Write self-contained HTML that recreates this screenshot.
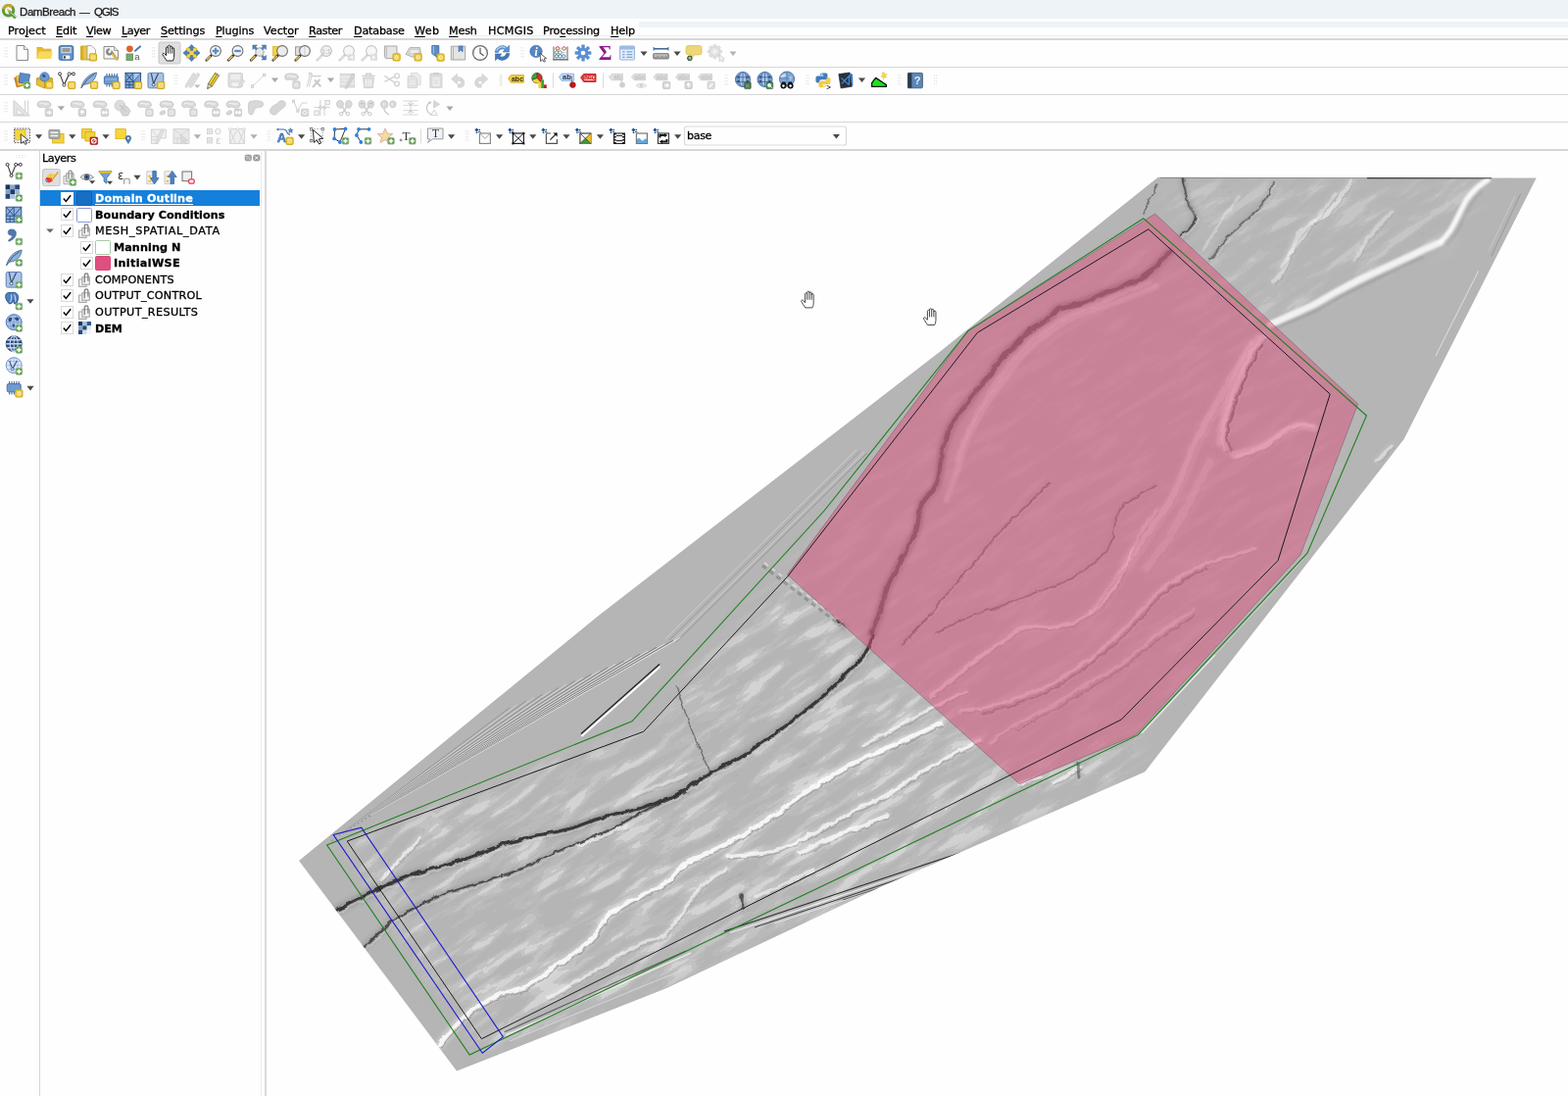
<!DOCTYPE html>
<html lang="en"><head><meta charset="utf-8"><title>DamBreach — QGIS</title>
<style>
html,body{margin:0;padding:0;}
body{width:1600px;height:1118px;overflow:hidden;background:#fefefe;position:relative;font-family:"DejaVu Sans","Liberation Sans",sans-serif;}
.t{position:absolute;white-space:pre;line-height:16px;height:16px;will-change:transform;-webkit-font-smoothing:antialiased;-webkit-text-stroke:0.3px currentColor;}
.l{font-family:"Liberation Sans",sans-serif;}
.a{position:absolute;}
.hl{position:absolute;left:0;width:1600px;height:1.6px;background:#d6d6d6;}
u{text-decoration-thickness:1px;text-underline-offset:1.5px;}
</style></head>
<body>
<svg class="a" style="left:0;top:0" width="1600" height="1118" viewBox="0 0 1600 1118">
<polygon points="1181.7,180.7 1567.7,181.6 1432.6,448.0 1168.3,787.2 900.0,904.0 680.0,1008.0 466.0,1092.5 305.0,878.0 610.7,628.0 960.0,358.0" fill="#b5b5b5"/>
<defs><clipPath id="dem"><polygon points="1181.7,180.7 1567.7,181.6 1432.6,448.0 1168.3,787.2 900.0,904.0 680.0,1008.0 466.0,1092.5 305.0,878.0 610.7,628.0 960.0,358.0"/></clipPath><filter id="b0" x="-5%" y="-5%" width="110%" height="110%"><feGaussianBlur stdDeviation="0.9"/></filter><filter id="b2" x="-5%" y="-5%" width="110%" height="110%"><feGaussianBlur stdDeviation="2.2"/></filter><filter id="rg" x="-2%" y="-2%" width="104%" height="104%"><feTurbulence type="fractalNoise" baseFrequency="0.11" numOctaves="2" seed="3" result="t"/><feDisplacementMap in="SourceGraphic" in2="t" scale="5" xChannelSelector="R" yChannelSelector="G"/><feGaussianBlur stdDeviation="0.55"/></filter><filter id="nz" x="0" y="0" width="100%" height="100%" color-interpolation-filters="sRGB"><feTurbulence type="fractalNoise" baseFrequency="0.018 0.085" numOctaves="4" seed="11"/><feColorMatrix type="matrix" values="1.1 0 0 0 0.16  1.1 0 0 0 0.16  1.1 0 0 0 0.16  0 0 0 0 1"/><feComponentTransfer><feFuncR type="discrete" tableValues="0.59 0.65 0.69 0.71 0.71 0.71 0.73 0.765 0.83"/><feFuncG type="discrete" tableValues="0.59 0.65 0.69 0.71 0.71 0.71 0.73 0.765 0.83"/><feFuncB type="discrete" tableValues="0.59 0.65 0.69 0.71 0.71 0.71 0.73 0.765 0.83"/></feComponentTransfer></filter></defs>
<defs><mask id="mk1" maskUnits="userSpaceOnUse" x="280" y="160" width="1320" height="958"><g filter="url(#b3)"><polygon points="354.0,858.0 656.0,746.0 803.0,588.0 1040.0,800.0 1160.0,750.0 1168.0,787.0 900.0,904.0 680.0,1008.0 492.0,1074.0" fill="#fff"/><polygon points="1185.0,183.0 1525.0,183.0 1480.0,250.0 1300.0,335.0 1180.0,222.0" fill="#8f8f8f"/><polygon points="1000.0,345.0 1175.0,235.0 1385.0,412.0 1327.0,566.0 1158.0,750.0 1040.0,800.0 803.0,586.0" fill="#5a5a5a"/></g></mask><filter id="b3" x="-5%" y="-5%" width="110%" height="110%"><feGaussianBlur stdDeviation="9"/></filter></defs>
<g clip-path="url(#dem)">
<g mask="url(#mk1)"><g transform="rotate(-33 900 640)"><rect x="100" y="250" width="1600" height="800" filter="url(#nz)"/></g></g>
<g fill="none" stroke-linejoin="round" stroke-linecap="round" filter="url(#b2)">
<path d="M1379.0 184.4C1375.2 189.7 1364.5 207.6 1356.0 216.0C1347.5 224.4 1335.5 225.6 1328.0 235.0C1320.5 244.4 1315.7 263.9 1311.0 272.7C1306.3 281.5 1301.8 285.2 1300.0 287.7" stroke="#fff" stroke-width="8.8" opacity="0.14"/>
<path d="M1420.0 216.0C1416.3 220.1 1403.9 232.6 1397.7 240.8C1391.5 249.0 1385.2 261.0 1382.7 265.0" stroke="#fff" stroke-width="6.6" opacity="0.12"/>
<path d="M1363.0 197.6C1357.5 204.7 1339.4 227.5 1330.0 240.0C1320.6 252.5 1310.6 267.2 1306.7 272.7" stroke="#fff" stroke-width="6.6" opacity="0.12"/>
<path d="M1172.0 288.0C1165.0 290.8 1143.7 299.3 1130.0 305.0C1116.3 310.7 1102.0 315.8 1090.0 322.0C1078.0 328.2 1067.2 334.7 1058.0 342.0C1048.8 349.3 1042.2 357.7 1035.0 366.0C1027.8 374.3 1021.2 383.0 1015.0 392.0C1008.8 401.0 1003.0 411.0 998.0 420.0C993.0 429.0 988.7 437.7 985.0 446.0C981.3 454.3 977.5 466.0 976.0 470.0" stroke="#fff" stroke-width="11.0" opacity="0.09"/>
<path d="M1290.0 342.6C1287.5 345.9 1279.2 355.1 1275.0 362.6C1270.8 370.1 1268.3 379.4 1265.0 387.7C1261.7 396.0 1257.9 404.0 1255.0 412.7C1252.1 421.4 1248.5 432.4 1247.8 440.0C1247.1 447.6 1250.5 455.0 1251.0 458.0" stroke="#fff" stroke-width="9.9" opacity="0.18"/>
<path d="M1262.0 466.0C1266.7 464.2 1282.0 459.3 1290.0 455.0C1298.0 450.7 1304.2 443.7 1310.0 440.0C1315.8 436.3 1320.0 433.5 1325.0 432.7C1330.0 431.9 1337.5 434.6 1340.0 435.0" stroke="#fff" stroke-width="8.8" opacity="0.20"/>
<path d="M1275.0 350.0C1270.5 358.3 1257.2 383.3 1248.0 400.0C1238.8 416.7 1228.0 433.3 1220.0 450.0C1212.0 466.7 1207.5 485.3 1200.0 500.0C1192.5 514.7 1183.3 525.4 1175.0 538.0C1166.7 550.6 1154.2 569.2 1150.0 575.5" stroke="#fff" stroke-width="13.2" opacity="0.10"/>
<path d="M1235.0 470.0C1231.7 476.7 1221.7 497.5 1215.0 510.0C1208.3 522.5 1202.5 533.3 1195.0 545.0C1187.5 556.7 1174.2 574.2 1170.0 580.0" stroke="#fff" stroke-width="17.6" opacity="0.08"/>
<path d="M1155.5 560.0C1153.0 565.4 1145.5 583.4 1140.5 592.6C1135.5 601.8 1132.2 608.3 1125.5 615.0C1118.8 621.7 1108.8 628.4 1100.4 632.6C1092.1 636.8 1084.6 638.8 1075.4 640.0C1066.2 641.2 1053.7 637.9 1045.3 640.0C1036.9 642.1 1032.8 647.7 1025.3 652.7C1017.8 657.7 1008.4 663.8 1000.0 670.0C991.6 676.2 983.3 683.3 975.0 690.0C966.7 696.7 954.2 706.7 950.0 710.0" stroke="#fff" stroke-width="7.7" opacity="0.20"/>
<path d="M1280.0 560.0C1271.8 562.5 1243.1 570.4 1230.7 575.0C1218.3 579.6 1213.9 582.6 1205.6 587.6C1197.2 592.6 1187.7 598.8 1180.6 605.0C1173.5 611.2 1169.3 618.3 1163.0 625.0C1156.7 631.7 1150.5 637.9 1143.0 645.0C1135.5 652.1 1126.3 661.0 1118.0 667.7C1109.7 674.4 1101.3 679.6 1093.0 685.0C1084.7 690.4 1078.4 695.0 1067.9 700.0C1057.4 705.0 1041.3 711.2 1030.0 715.0C1018.7 718.8 1008.3 721.3 1000.0 723.0C991.7 724.7 983.3 724.7 980.0 725.0" stroke="#fff" stroke-width="7.0" opacity="0.18"/>
<path d="M1218.0 622.6C1211.8 626.8 1193.1 638.5 1180.6 647.7C1168.1 656.9 1155.5 669.0 1143.0 677.7C1130.5 686.4 1117.9 692.5 1105.4 700.0C1092.9 707.5 1079.7 716.1 1068.0 722.8C1056.3 729.5 1044.7 734.1 1035.0 740.0C1025.3 745.9 1014.2 755.0 1010.0 758.0" stroke="#fff" stroke-width="6.6" opacity="0.14"/>
<path d="M1180.0 520.0C1177.6 523.3 1170.6 531.7 1165.7 540.0C1160.8 548.3 1156.5 560.0 1150.7 570.0C1144.9 580.0 1137.0 590.8 1130.7 600.0C1124.4 609.2 1116.0 620.8 1113.0 625.0" stroke="#fff" stroke-width="6.6" opacity="0.12"/>
<path d="M960.0 737.6C953.0 740.8 932.4 750.4 918.0 757.0C903.6 763.6 888.4 769.3 873.7 777.0C859.0 784.7 844.4 793.5 829.8 803.0C815.2 812.5 800.6 824.5 786.0 834.0C771.4 843.5 756.7 852.0 742.0 860.0C727.3 868.0 708.3 875.3 698.0 882.0C687.7 888.7 687.7 894.6 680.0 900.0C672.3 905.4 661.5 909.2 652.0 914.5C642.5 919.8 630.2 925.4 623.0 931.6C615.8 937.8 613.7 946.0 609.0 951.7C604.3 957.4 601.9 960.3 594.7 966.0C587.5 971.7 575.5 979.3 566.0 986.0C556.5 992.7 547.0 1001.2 537.5 1006.0C528.0 1010.8 518.6 1010.3 509.0 1014.6C499.4 1018.9 488.6 1025.1 480.0 1031.8C471.4 1038.5 462.6 1049.0 457.4 1054.7C452.2 1060.4 450.2 1064.1 448.8 1066.0" stroke="#fff" stroke-width="8.8" opacity="0.34"/>
<path d="M985.0 705.0C977.5 708.8 954.2 720.5 940.0 728.0C925.8 735.5 910.0 744.7 900.0 750.0C890.0 755.3 883.3 758.3 880.0 760.0" stroke="#fff" stroke-width="6.6" opacity="0.24"/>
<path d="M1000.0 755.0C993.3 758.5 971.7 769.5 960.0 776.0C948.3 782.5 939.2 788.2 930.0 794.0C920.8 799.8 915.0 804.8 905.0 810.5C895.0 816.2 882.5 821.4 870.0 828.0C857.5 834.6 843.3 843.3 830.0 850.0C816.7 856.7 804.7 864.1 790.0 868.0C775.3 871.9 750.0 872.6 742.0 873.5" stroke="#fff" stroke-width="7.0" opacity="0.28"/>
<path d="M742.0 886.0C737.5 889.2 725.3 894.0 715.0 905.0C704.7 916.0 690.5 942.0 680.0 951.7C669.5 961.4 661.5 958.3 652.0 963.0C642.5 967.7 632.5 974.2 623.0 980.0C613.5 985.8 605.2 991.2 594.7 997.5C584.2 1003.8 565.8 1014.6 560.0 1018.0" stroke="#fff" stroke-width="6.6" opacity="0.20"/>
<path d="M905.0 832.0C899.2 834.3 880.8 841.7 870.0 846.0C859.2 850.3 849.2 854.0 840.0 858.0C830.8 862.0 819.2 868.0 815.0 870.0" stroke="#fff" stroke-width="8.8" opacity="0.28"/>
<path d="M830.0 888.0C825.0 890.3 810.0 897.5 800.0 902.0C790.0 906.5 775.0 912.8 770.0 915.0" stroke="#fff" stroke-width="7.7" opacity="0.20"/>
<path d="M640.0 842.0C635.8 843.7 623.3 848.7 615.0 852.0C606.7 855.3 594.2 860.3 590.0 862.0" stroke="#fff" stroke-width="7.7" opacity="0.16"/>
<path d="M428.8 854.4C425.7 857.8 416.7 867.9 410.0 875.0C403.3 882.1 392.2 893.6 388.7 897.3" stroke="#fff" stroke-width="6.6" opacity="0.24"/>
<path d="M700.0 790.0C695.0 792.0 679.2 798.3 670.0 802.0C660.8 805.7 649.2 810.3 645.0 812.0" stroke="#fff" stroke-width="6.6" opacity="0.14"/>
<path d="M1075.0 798.0C1077.5 796.7 1085.5 792.7 1090.0 790.0C1094.5 787.3 1100.0 783.3 1102.0 782.0" stroke="#fff" stroke-width="7.7" opacity="0.24"/>
<path d="M1040.0 800.0L1062.0 793.0" stroke="#fff" stroke-width="6.6" opacity="0.20"/>
<path d="M1392.0 505.0C1390.0 510.8 1384.3 529.2 1380.0 540.0C1375.7 550.8 1368.3 565.0 1366.0 570.0" stroke="#fff" stroke-width="6.6" opacity="0.14"/>
<path d="M1405.0 470.0L1420.0 455.0" stroke="#fff" stroke-width="6.6" opacity="0.16"/>
<path d="M1193.0 257.6C1189.2 261.3 1177.6 274.6 1170.5 280.0C1163.4 285.4 1158.0 286.7 1150.5 290.0C1143.0 293.3 1133.8 296.7 1125.4 300.0C1117.1 303.3 1108.0 307.5 1100.4 310.0C1092.8 312.5 1085.1 312.5 1080.0 315.0C1074.9 317.5 1075.0 321.2 1070.0 325.0C1065.0 328.8 1055.8 333.2 1050.0 337.8C1044.2 342.4 1040.0 347.8 1035.0 352.8C1030.0 357.8 1024.2 362.9 1020.0 367.9C1015.8 372.9 1014.2 377.5 1010.0 382.9C1005.8 388.3 1000.0 394.1 995.0 400.4C990.0 406.6 984.2 414.5 980.0 420.4C975.8 426.2 972.9 429.6 970.0 435.5C967.1 441.4 964.2 449.8 962.6 455.5C961.0 461.2 961.5 463.4 960.3 470.0C959.1 476.6 958.6 487.5 955.3 495.0C952.0 502.5 943.6 507.5 940.3 515.0C937.0 522.5 938.6 530.8 935.3 540.0C932.0 549.2 925.3 560.0 920.3 570.0C915.3 580.0 909.0 590.8 905.2 600.0C901.4 609.2 900.2 617.5 897.7 625.0C895.2 632.5 891.3 641.7 890.0 645.0" stroke="#555" stroke-width="11.0" opacity="0.17"/>
<path d="M890.0 648.0C889.3 650.4 888.0 658.1 885.6 662.6C883.2 667.1 879.8 670.4 875.6 675.0C871.4 679.6 865.6 685.0 860.6 690.0C855.6 695.0 851.0 700.0 845.6 705.0C840.2 710.0 834.7 714.5 828.0 720.0C821.3 725.5 813.4 731.9 805.5 737.8C797.6 743.7 788.8 749.5 780.4 755.3C772.0 761.1 763.7 767.8 755.4 772.8C747.1 777.8 737.9 781.1 730.4 785.3C722.9 789.5 717.0 793.7 710.3 797.9C703.6 802.1 697.8 806.6 690.3 810.4C682.8 814.1 673.6 817.5 665.2 820.4C656.9 823.3 649.4 825.5 640.2 828.0C631.0 830.5 619.2 832.7 610.0 835.4C600.8 838.1 592.3 842.0 585.0 844.2C577.7 846.4 573.9 847.0 566.0 848.7C558.1 850.4 547.0 852.0 537.5 854.4C528.0 856.8 518.6 859.7 509.0 863.0C499.4 866.3 489.6 871.1 480.0 874.4C470.4 877.7 461.2 880.1 451.7 883.0C442.2 885.9 432.6 888.3 423.0 891.6C413.4 894.9 403.9 898.8 394.4 903.0C384.9 907.2 374.4 912.7 365.8 917.0C357.2 921.3 346.8 926.8 343.0 928.8" stroke="#555" stroke-width="7.7" opacity="0.32"/>
<path d="M700.0 808.0C693.3 811.0 672.8 819.7 660.0 826.0C647.2 832.3 634.0 840.7 623.0 846.0C612.0 851.3 603.5 854.0 594.0 858.0C584.5 862.0 575.5 865.7 566.0 870.0C556.5 874.3 546.5 879.9 537.0 884.0C527.5 888.1 521.3 890.4 509.0 894.5C496.7 898.6 476.4 904.0 463.0 908.8C449.6 913.5 439.3 917.8 428.8 923.0C418.3 928.2 409.5 932.8 400.0 940.0C390.5 947.2 376.3 961.7 371.6 966.0" stroke="#555" stroke-width="5.3" opacity="0.26"/>
<path d="M1070.5 492.6C1065.9 497.2 1051.8 511.3 1043.0 520.0C1034.2 528.7 1025.5 536.7 1018.0 545.0C1010.5 553.3 1005.1 561.7 998.0 570.0C990.9 578.3 983.4 585.8 975.4 595.0C967.4 604.2 959.5 614.5 950.3 625.0C941.1 635.5 925.3 652.5 920.3 658.0" stroke="#555" stroke-width="3.8" opacity="0.16"/>
<path d="M1180.0 495.0C1173.8 499.2 1151.2 509.2 1143.0 520.0C1134.8 530.8 1139.0 548.3 1130.7 560.0C1122.4 571.7 1105.6 582.5 1093.0 590.0C1080.4 597.5 1065.4 600.8 1055.0 605.0C1044.6 609.2 1040.8 611.2 1030.5 615.0C1020.2 618.8 1005.6 622.9 993.0 628.0C980.4 633.1 961.3 642.5 955.0 645.4" stroke="#555" stroke-width="3.8" opacity="0.14"/>
<path d="M1288.0 352.0C1285.3 357.0 1276.7 371.5 1272.0 382.0C1267.3 392.5 1263.1 404.9 1259.8 415.0C1256.5 425.1 1252.5 435.3 1252.0 442.8C1251.5 450.3 1256.2 457.1 1257.0 460.0" stroke="#555" stroke-width="5.3" opacity="0.16"/>
<path d="M1207.0 182.5C1208.0 186.6 1210.5 200.4 1212.7 207.0C1214.9 213.6 1220.3 217.3 1220.0 222.0C1219.7 226.7 1213.3 231.9 1210.8 235.0C1208.3 238.1 1206.0 239.8 1205.0 240.8" stroke="#555" stroke-width="5.8" opacity="0.24"/>
<path d="M1299.0 184.4C1298.4 186.6 1297.9 192.9 1295.4 197.6C1292.9 202.3 1288.4 207.9 1284.0 212.6C1279.6 217.3 1274.0 221.1 1269.0 225.8C1264.0 230.5 1258.4 236.1 1254.0 240.8C1249.6 245.5 1246.0 250.0 1242.8 254.0C1239.6 258.0 1236.3 263.2 1235.0 265.0" stroke="#555" stroke-width="4.3" opacity="0.17"/>
<path d="M757.0 913.0L758.0 926.0" stroke="#555" stroke-width="8.2" opacity="0.24"/>
<path d="M1100.0 778.0L1101.0 792.0" stroke="#555" stroke-width="7.7" opacity="0.16"/>
<path d="M855.0 634.0L862.0 640.0" stroke="#555" stroke-width="5.8" opacity="0.24"/>
<path d="M1232.0 580.0C1227.8 582.0 1215.3 587.0 1207.0 592.0C1198.7 597.0 1189.0 603.7 1182.0 610.0C1175.0 616.3 1171.2 623.3 1165.0 630.0C1158.8 636.7 1152.5 643.0 1145.0 650.0C1137.5 657.0 1128.3 665.3 1120.0 672.0C1111.7 678.7 1103.3 684.5 1095.0 690.0C1086.7 695.5 1080.5 700.0 1070.0 705.0C1059.5 710.0 1043.3 716.2 1032.0 720.0C1020.7 723.8 1007.0 726.7 1002.0 728.0" stroke="#555" stroke-width="3.8" opacity="0.12"/>
</g>
<g fill="none" stroke-linejoin="round" stroke-linecap="round" filter="url(#rg)">
<path d="M1379.0 184.4C1375.2 189.7 1364.5 207.6 1356.0 216.0C1347.5 224.4 1335.5 225.6 1328.0 235.0C1320.5 244.4 1315.7 263.9 1311.0 272.7C1306.3 281.5 1301.8 285.2 1300.0 287.7" stroke="#fdfdfd" stroke-width="4.0" opacity="0.35"/>
<path d="M1380.6 187.6C1376.8 192.9 1366.1 210.8 1357.6 219.2C1349.1 227.6 1337.1 228.8 1329.6 238.2C1322.1 247.6 1317.3 267.1 1312.6 275.9C1307.9 284.7 1303.4 288.4 1301.6 290.9" stroke="#6a6a6a" stroke-width="1.4" opacity="0.16"/>
<path d="M1420.0 216.0C1416.3 220.1 1403.9 232.6 1397.7 240.8C1391.5 249.0 1385.2 261.0 1382.7 265.0" stroke="#fdfdfd" stroke-width="3.0" opacity="0.30"/>
<path d="M1421.6 218.7C1417.9 222.8 1405.5 235.3 1399.3 243.5C1393.1 251.6 1386.8 263.6 1384.3 267.6" stroke="#6a6a6a" stroke-width="1.4" opacity="0.14"/>
<path d="M1363.0 197.6C1357.5 204.7 1339.4 227.5 1330.0 240.0C1320.6 252.5 1310.6 267.2 1306.7 272.7" stroke="#fdfdfd" stroke-width="3.0" opacity="0.30"/>
<path d="M1364.6 200.2C1359.1 207.3 1341.0 230.1 1331.6 242.7C1322.2 255.2 1312.2 269.9 1308.3 275.3" stroke="#6a6a6a" stroke-width="1.4" opacity="0.14"/>
<path d="M1265.0 200.0C1260.8 205.8 1246.2 225.8 1240.0 235.0C1233.8 244.2 1230.0 251.7 1228.0 255.0" stroke="#fdfdfd" stroke-width="2.5" opacity="0.30"/>
<path d="M1172.0 288.0C1165.0 290.8 1143.7 299.3 1130.0 305.0C1116.3 310.7 1102.0 315.8 1090.0 322.0C1078.0 328.2 1067.2 334.7 1058.0 342.0C1048.8 349.3 1042.2 357.7 1035.0 366.0C1027.8 374.3 1021.2 383.0 1015.0 392.0C1008.8 401.0 1003.0 411.0 998.0 420.0C993.0 429.0 988.7 437.7 985.0 446.0C981.3 454.3 977.5 466.0 976.0 470.0" stroke="#fdfdfd" stroke-width="5.0" opacity="0.22"/>
<path d="M1173.6 291.8C1166.6 294.6 1145.3 303.1 1131.6 308.8C1117.9 314.4 1103.6 319.6 1091.6 325.8C1079.6 331.9 1068.8 338.4 1059.6 345.8C1050.4 353.1 1043.8 361.4 1036.6 369.8C1029.4 378.1 1022.8 386.8 1016.6 395.8C1010.4 404.8 1004.6 414.8 999.6 423.8C994.6 432.8 990.3 441.4 986.6 449.8C982.9 458.1 979.1 469.8 977.6 473.8" stroke="#6a6a6a" stroke-width="1.4" opacity="0.10"/>
<path d="M1290.0 342.6C1287.5 345.9 1279.2 355.1 1275.0 362.6C1270.8 370.1 1268.3 379.4 1265.0 387.7C1261.7 396.0 1257.9 404.0 1255.0 412.7C1252.1 421.4 1248.5 432.4 1247.8 440.0C1247.1 447.6 1250.5 455.0 1251.0 458.0" stroke="#fdfdfd" stroke-width="4.5" opacity="0.45"/>
<path d="M1291.6 346.1C1289.1 349.4 1280.8 358.6 1276.6 366.1C1272.4 373.6 1269.9 382.8 1266.6 391.2C1263.3 399.5 1259.5 407.5 1256.6 416.2C1253.7 424.9 1250.1 435.9 1249.4 443.5C1248.7 451.0 1252.1 458.5 1252.6 461.5" stroke="#6a6a6a" stroke-width="1.4" opacity="0.20"/>
<path d="M1262.0 466.0C1266.7 464.2 1282.0 459.3 1290.0 455.0C1298.0 450.7 1304.2 443.7 1310.0 440.0C1315.8 436.3 1320.0 433.5 1325.0 432.7C1330.0 431.9 1337.5 434.6 1340.0 435.0" stroke="#fdfdfd" stroke-width="4.0" opacity="0.50"/>
<path d="M1263.6 469.2C1268.3 467.4 1283.6 462.5 1291.6 458.2C1299.6 453.9 1305.8 446.9 1311.6 443.2C1317.4 439.5 1321.6 436.7 1326.6 435.9C1331.6 435.1 1339.1 437.8 1341.6 438.2" stroke="#6a6a6a" stroke-width="1.4" opacity="0.23"/>
<path d="M1275.0 350.0C1270.5 358.3 1257.2 383.3 1248.0 400.0C1238.8 416.7 1228.0 433.3 1220.0 450.0C1212.0 466.7 1207.5 485.3 1200.0 500.0C1192.5 514.7 1183.3 525.4 1175.0 538.0C1166.7 550.6 1154.2 569.2 1150.0 575.5" stroke="#fdfdfd" stroke-width="6.0" opacity="0.25"/>
<path d="M1276.6 354.3C1272.1 362.6 1258.8 387.6 1249.6 404.3C1240.4 421.0 1229.6 437.6 1221.6 454.3C1213.6 471.0 1209.1 489.6 1201.6 504.3C1194.1 519.0 1184.9 529.7 1176.6 542.3C1168.3 554.9 1155.8 573.5 1151.6 579.8" stroke="#6a6a6a" stroke-width="1.4" opacity="0.11"/>
<path d="M1235.0 470.0C1231.7 476.7 1221.7 497.5 1215.0 510.0C1208.3 522.5 1202.5 533.3 1195.0 545.0C1187.5 556.7 1174.2 574.2 1170.0 580.0" stroke="#fdfdfd" stroke-width="8.0" opacity="0.20"/>
<path d="M1236.6 475.4C1233.3 482.1 1223.3 502.9 1216.6 515.4C1209.9 527.9 1204.1 538.7 1196.6 550.4C1189.1 562.1 1175.8 579.6 1171.6 585.4" stroke="#6a6a6a" stroke-width="1.4" opacity="0.09"/>
<path d="M1155.5 560.0C1153.0 565.4 1145.5 583.4 1140.5 592.6C1135.5 601.8 1132.2 608.3 1125.5 615.0C1118.8 621.7 1108.8 628.4 1100.4 632.6C1092.1 636.8 1084.6 638.8 1075.4 640.0C1066.2 641.2 1053.7 637.9 1045.3 640.0C1036.9 642.1 1032.8 647.7 1025.3 652.7C1017.8 657.7 1008.4 663.8 1000.0 670.0C991.6 676.2 983.3 683.3 975.0 690.0C966.7 696.7 954.2 706.7 950.0 710.0" stroke="#fdfdfd" stroke-width="3.5" opacity="0.50"/>
<path d="M1157.1 562.9C1154.6 568.4 1147.1 586.4 1142.1 595.5C1137.1 604.7 1133.8 611.3 1127.1 617.9C1120.4 624.6 1110.3 631.4 1102.0 635.5C1093.7 639.7 1086.2 641.7 1077.0 642.9C1067.8 644.2 1055.2 640.8 1046.9 642.9C1038.5 645.0 1034.4 650.6 1026.9 655.6C1019.3 660.6 1010.0 666.7 1001.6 672.9C993.2 679.1 984.9 686.3 976.6 692.9C968.3 699.6 955.8 709.6 951.6 712.9" stroke="#6a6a6a" stroke-width="1.4" opacity="0.23"/>
<path d="M1280.0 560.0C1271.8 562.5 1243.1 570.4 1230.7 575.0C1218.3 579.6 1213.9 582.6 1205.6 587.6C1197.2 592.6 1187.7 598.8 1180.6 605.0C1173.5 611.2 1169.3 618.3 1163.0 625.0C1156.7 631.7 1150.5 637.9 1143.0 645.0C1135.5 652.1 1126.3 661.0 1118.0 667.7C1109.7 674.4 1101.3 679.6 1093.0 685.0C1084.7 690.4 1078.4 695.0 1067.9 700.0C1057.4 705.0 1041.3 711.2 1030.0 715.0C1018.7 718.8 1008.3 721.3 1000.0 723.0C991.7 724.7 983.3 724.7 980.0 725.0" stroke="#fdfdfd" stroke-width="3.2" opacity="0.45"/>
<path d="M1281.6 562.8C1273.4 565.3 1244.7 573.2 1232.3 577.8C1219.9 582.4 1215.5 585.4 1207.2 590.4C1198.8 595.4 1189.3 601.5 1182.2 607.8C1175.1 614.0 1170.9 621.1 1164.6 627.8C1158.3 634.4 1152.1 640.6 1144.6 647.8C1137.1 654.9 1127.9 663.8 1119.6 670.5C1111.3 677.1 1102.9 682.4 1094.6 687.8C1086.2 693.1 1080.0 697.8 1069.5 702.8C1059.0 707.8 1042.9 713.9 1031.6 717.8C1020.3 721.6 1009.9 724.1 1001.6 725.8C993.3 727.4 984.9 727.4 981.6 727.8" stroke="#6a6a6a" stroke-width="1.4" opacity="0.20"/>
<path d="M1218.0 622.6C1211.8 626.8 1193.1 638.5 1180.6 647.7C1168.1 656.9 1155.5 669.0 1143.0 677.7C1130.5 686.4 1117.9 692.5 1105.4 700.0C1092.9 707.5 1079.7 716.1 1068.0 722.8C1056.3 729.5 1044.7 734.1 1035.0 740.0C1025.3 745.9 1014.2 755.0 1010.0 758.0" stroke="#fdfdfd" stroke-width="3.0" opacity="0.35"/>
<path d="M1219.6 625.2C1213.4 629.4 1194.7 641.2 1182.2 650.4C1169.7 659.5 1157.1 671.6 1144.6 680.4C1132.1 689.1 1119.5 695.1 1107.0 702.6C1094.5 710.2 1081.3 718.8 1069.6 725.4C1057.9 732.1 1046.3 736.8 1036.6 742.6C1026.9 748.5 1015.8 757.6 1011.6 760.6" stroke="#6a6a6a" stroke-width="1.4" opacity="0.16"/>
<path d="M1180.0 520.0C1177.6 523.3 1170.6 531.7 1165.7 540.0C1160.8 548.3 1156.5 560.0 1150.7 570.0C1144.9 580.0 1137.0 590.8 1130.7 600.0C1124.4 609.2 1116.0 620.8 1113.0 625.0" stroke="#fdfdfd" stroke-width="3.0" opacity="0.30"/>
<path d="M1181.6 522.6C1179.2 526.0 1172.2 534.3 1167.3 542.6C1162.4 551.0 1158.1 562.6 1152.3 572.6C1146.5 582.6 1138.6 593.5 1132.3 602.6C1126.0 611.8 1117.5 623.5 1114.6 627.6" stroke="#6a6a6a" stroke-width="1.4" opacity="0.14"/>
<path d="M960.0 737.6C953.0 740.8 932.4 750.4 918.0 757.0C903.6 763.6 888.4 769.3 873.7 777.0C859.0 784.7 844.4 793.5 829.8 803.0C815.2 812.5 800.6 824.5 786.0 834.0C771.4 843.5 756.7 852.0 742.0 860.0C727.3 868.0 708.3 875.3 698.0 882.0C687.7 888.7 687.7 894.6 680.0 900.0C672.3 905.4 661.5 909.2 652.0 914.5C642.5 919.8 630.2 925.4 623.0 931.6C615.8 937.8 613.7 946.0 609.0 951.7C604.3 957.4 601.9 960.3 594.7 966.0C587.5 971.7 575.5 979.3 566.0 986.0C556.5 992.7 547.0 1001.2 537.5 1006.0C528.0 1010.8 518.6 1010.3 509.0 1014.6C499.4 1018.9 488.6 1025.1 480.0 1031.8C471.4 1038.5 462.6 1049.0 457.4 1054.7C452.2 1060.4 450.2 1064.1 448.8 1066.0" stroke="#fdfdfd" stroke-width="4.0" opacity="0.85"/>
<path d="M961.6 740.8C954.6 744.0 934.0 753.6 919.6 760.2C905.2 766.8 890.0 772.5 875.3 780.2C860.6 787.9 846.0 796.7 831.4 806.2C816.8 815.7 802.2 827.7 787.6 837.2C773.0 846.7 758.3 855.2 743.6 863.2C728.9 871.2 709.9 878.5 699.6 885.2C689.3 891.9 689.3 897.8 681.6 903.2C673.9 908.6 663.1 912.4 653.6 917.7C644.1 923.0 631.8 928.6 624.6 934.8C617.4 941.0 615.3 949.2 610.6 954.9C605.9 960.6 603.5 963.5 596.3 969.2C589.1 974.9 577.1 982.5 567.6 989.2C558.1 995.9 548.6 1004.4 539.1 1009.2C529.6 1014.0 520.2 1013.5 510.6 1017.8C501.0 1022.1 490.2 1028.3 481.6 1035.0C473.0 1041.7 464.2 1052.2 459.0 1057.9C453.8 1063.6 451.8 1067.3 450.4 1069.2" stroke="#6a6a6a" stroke-width="1.4" opacity="0.38"/>
<path d="M985.0 705.0C977.5 708.8 954.2 720.5 940.0 728.0C925.8 735.5 910.0 744.7 900.0 750.0C890.0 755.3 883.3 758.3 880.0 760.0" stroke="#fdfdfd" stroke-width="3.0" opacity="0.60"/>
<path d="M986.6 707.6C979.1 711.5 955.8 723.1 941.6 730.6C927.4 738.1 911.6 747.3 901.6 752.6C891.6 758.0 884.9 761.0 881.6 762.6" stroke="#6a6a6a" stroke-width="1.4" opacity="0.27"/>
<path d="M1000.0 755.0C993.3 758.5 971.7 769.5 960.0 776.0C948.3 782.5 939.2 788.2 930.0 794.0C920.8 799.8 915.0 804.8 905.0 810.5C895.0 816.2 882.5 821.4 870.0 828.0C857.5 834.6 843.3 843.3 830.0 850.0C816.7 856.7 804.7 864.1 790.0 868.0C775.3 871.9 750.0 872.6 742.0 873.5" stroke="#fdfdfd" stroke-width="3.2" opacity="0.70"/>
<path d="M1001.6 757.8C994.9 761.3 973.3 772.3 961.6 778.8C949.9 785.3 940.8 791.0 931.6 796.8C922.4 802.5 916.6 807.6 906.6 813.3C896.6 818.9 884.1 824.2 871.6 830.8C859.1 837.3 844.9 846.1 831.6 852.8C818.3 859.4 806.3 866.8 791.6 870.8C776.9 874.7 751.6 875.3 743.6 876.3" stroke="#6a6a6a" stroke-width="1.4" opacity="0.32"/>
<path d="M742.0 886.0C737.5 889.2 725.3 894.0 715.0 905.0C704.7 916.0 690.5 942.0 680.0 951.7C669.5 961.4 661.5 958.3 652.0 963.0C642.5 967.7 632.5 974.2 623.0 980.0C613.5 985.8 605.2 991.2 594.7 997.5C584.2 1003.8 565.8 1014.6 560.0 1018.0" stroke="#fdfdfd" stroke-width="3.0" opacity="0.50"/>
<path d="M743.6 888.6C739.1 891.8 726.9 896.7 716.6 907.6C706.3 918.6 692.1 944.7 681.6 954.4C671.1 964.0 663.1 960.9 653.6 965.6C644.1 970.4 634.1 976.9 624.6 982.6C615.1 988.4 606.8 993.8 596.3 1000.1C585.8 1006.5 567.4 1017.2 561.6 1020.6" stroke="#6a6a6a" stroke-width="1.4" opacity="0.23"/>
<path d="M905.0 832.0C899.2 834.3 880.8 841.7 870.0 846.0C859.2 850.3 849.2 854.0 840.0 858.0C830.8 862.0 819.2 868.0 815.0 870.0" stroke="#fdfdfd" stroke-width="4.0" opacity="0.70"/>
<path d="M906.6 835.2C900.8 837.5 882.4 844.9 871.6 849.2C860.8 853.5 850.8 857.2 841.6 861.2C832.4 865.2 820.8 871.2 816.6 873.2" stroke="#6a6a6a" stroke-width="1.4" opacity="0.32"/>
<path d="M830.0 888.0C825.0 890.3 810.0 897.5 800.0 902.0C790.0 906.5 775.0 912.8 770.0 915.0" stroke="#fdfdfd" stroke-width="3.5" opacity="0.50"/>
<path d="M831.6 890.9C826.6 893.3 811.6 900.4 801.6 904.9C791.6 909.4 776.6 915.8 771.6 917.9" stroke="#6a6a6a" stroke-width="1.4" opacity="0.23"/>
<path d="M640.0 842.0C635.8 843.7 623.3 848.7 615.0 852.0C606.7 855.3 594.2 860.3 590.0 862.0" stroke="#fdfdfd" stroke-width="3.5" opacity="0.40"/>
<path d="M641.6 844.9C637.4 846.6 624.9 851.6 616.6 854.9C608.3 858.3 595.8 863.3 591.6 864.9" stroke="#6a6a6a" stroke-width="1.4" opacity="0.18"/>
<path d="M428.8 854.4C425.7 857.8 416.7 867.9 410.0 875.0C403.3 882.1 392.2 893.6 388.7 897.3" stroke="#fdfdfd" stroke-width="3.0" opacity="0.60"/>
<path d="M430.4 857.0C427.3 860.5 418.3 870.5 411.6 877.6C404.9 884.8 393.9 896.2 390.3 899.9" stroke="#6a6a6a" stroke-width="1.4" opacity="0.27"/>
<path d="M700.0 790.0C695.0 792.0 679.2 798.3 670.0 802.0C660.8 805.7 649.2 810.3 645.0 812.0" stroke="#fdfdfd" stroke-width="3.0" opacity="0.35"/>
<path d="M701.6 792.6C696.6 794.6 680.8 801.0 671.6 804.6C662.4 808.3 650.8 813.0 646.6 814.6" stroke="#6a6a6a" stroke-width="1.4" opacity="0.16"/>
<path d="M1075.0 798.0C1077.5 796.7 1085.5 792.7 1090.0 790.0C1094.5 787.3 1100.0 783.3 1102.0 782.0" stroke="#fdfdfd" stroke-width="3.5" opacity="0.60"/>
<path d="M1076.6 800.9C1079.1 799.6 1087.1 795.6 1091.6 792.9C1096.1 790.3 1101.6 786.3 1103.6 784.9" stroke="#6a6a6a" stroke-width="1.4" opacity="0.27"/>
<path d="M1040.0 800.0L1062.0 793.0" stroke="#fdfdfd" stroke-width="3.0" opacity="0.50"/>
<path d="M1041.6 802.6L1063.6 795.6" stroke="#6a6a6a" stroke-width="1.4" opacity="0.23"/>
<path d="M1392.0 505.0C1390.0 510.8 1384.3 529.2 1380.0 540.0C1375.7 550.8 1368.3 565.0 1366.0 570.0" stroke="#fdfdfd" stroke-width="3.0" opacity="0.35"/>
<path d="M1393.6 507.6C1391.6 513.5 1385.9 531.8 1381.6 542.6C1377.3 553.5 1369.9 567.6 1367.6 572.6" stroke="#6a6a6a" stroke-width="1.4" opacity="0.16"/>
<path d="M1405.0 470.0L1420.0 455.0" stroke="#fdfdfd" stroke-width="3.0" opacity="0.40"/>
<path d="M1406.6 472.6L1421.6 457.6" stroke="#6a6a6a" stroke-width="1.4" opacity="0.18"/>
<path d="M1193.0 257.6C1189.2 261.3 1177.6 274.6 1170.5 280.0C1163.4 285.4 1158.0 286.7 1150.5 290.0C1143.0 293.3 1133.8 296.7 1125.4 300.0C1117.1 303.3 1108.0 307.5 1100.4 310.0C1092.8 312.5 1085.1 312.5 1080.0 315.0C1074.9 317.5 1075.0 321.2 1070.0 325.0C1065.0 328.8 1055.8 333.2 1050.0 337.8C1044.2 342.4 1040.0 347.8 1035.0 352.8C1030.0 357.8 1024.2 362.9 1020.0 367.9C1015.8 372.9 1014.2 377.5 1010.0 382.9C1005.8 388.3 1000.0 394.1 995.0 400.4C990.0 406.6 984.2 414.5 980.0 420.4C975.8 426.2 972.9 429.6 970.0 435.5C967.1 441.4 964.2 449.8 962.6 455.5C961.0 461.2 961.5 463.4 960.3 470.0C959.1 476.6 958.6 487.5 955.3 495.0C952.0 502.5 943.6 507.5 940.3 515.0C937.0 522.5 938.6 530.8 935.3 540.0C932.0 549.2 925.3 560.0 920.3 570.0C915.3 580.0 909.0 590.8 905.2 600.0C901.4 609.2 900.2 617.5 897.7 625.0C895.2 632.5 891.3 641.7 890.0 645.0" stroke="#2b2b2b" stroke-width="4.6" opacity="0.50"/>
<path d="M1194.6 261.5C1190.8 265.2 1179.2 278.5 1172.1 283.9C1165.0 289.3 1159.6 290.6 1152.1 293.9C1144.6 297.2 1135.3 300.6 1127.0 303.9C1118.7 307.2 1109.6 311.4 1102.0 313.9C1094.4 316.4 1086.7 316.4 1081.6 318.9C1076.5 321.4 1076.6 325.1 1071.6 328.9C1066.6 332.7 1057.4 337.1 1051.6 341.7C1045.8 346.3 1041.6 351.7 1036.6 356.7C1031.6 361.7 1025.8 366.8 1021.6 371.8C1017.4 376.8 1015.8 381.4 1011.6 386.8C1007.4 392.2 1001.6 398.0 996.6 404.3C991.6 410.5 985.8 418.4 981.6 424.3C977.4 430.1 974.5 433.5 971.6 439.4C968.7 445.2 965.8 453.6 964.2 459.4C962.6 465.1 963.1 467.3 961.9 473.9C960.7 480.5 960.2 491.4 956.9 498.9C953.6 506.4 945.2 511.4 941.9 518.9C938.6 526.4 940.2 534.7 936.9 543.9C933.6 553.1 926.9 563.9 921.9 573.9C916.9 583.9 910.6 594.7 906.8 603.9C903.0 613.1 901.8 621.4 899.3 628.9C896.8 636.4 892.9 645.6 891.6 648.9" stroke="#f4f4f4" stroke-width="1.6" opacity="0.20"/>
<path d="M890.0 648.0C889.3 650.4 888.0 658.1 885.6 662.6C883.2 667.1 879.8 670.4 875.6 675.0C871.4 679.6 865.6 685.0 860.6 690.0C855.6 695.0 851.0 700.0 845.6 705.0C840.2 710.0 834.7 714.5 828.0 720.0C821.3 725.5 813.4 731.9 805.5 737.8C797.6 743.7 788.8 749.5 780.4 755.3C772.0 761.1 763.7 767.8 755.4 772.8C747.1 777.8 737.9 781.1 730.4 785.3C722.9 789.5 717.0 793.7 710.3 797.9C703.6 802.1 697.8 806.6 690.3 810.4C682.8 814.1 673.6 817.5 665.2 820.4C656.9 823.3 649.4 825.5 640.2 828.0C631.0 830.5 619.2 832.7 610.0 835.4C600.8 838.1 592.3 842.0 585.0 844.2C577.7 846.4 573.9 847.0 566.0 848.7C558.1 850.4 547.0 852.0 537.5 854.4C528.0 856.8 518.6 859.7 509.0 863.0C499.4 866.3 489.6 871.1 480.0 874.4C470.4 877.7 461.2 880.1 451.7 883.0C442.2 885.9 432.6 888.3 423.0 891.6C413.4 894.9 403.9 898.8 394.4 903.0C384.9 907.2 374.4 912.7 365.8 917.0C357.2 921.3 346.8 926.8 343.0 928.8" stroke="#2b2b2b" stroke-width="3.2" opacity="0.90"/>
<path d="M891.6 651.2C890.9 653.6 889.6 661.3 887.2 665.8C884.8 670.3 881.4 673.6 877.2 678.2C873.0 682.8 867.2 688.2 862.2 693.2C857.2 698.2 852.6 703.2 847.2 708.2C841.8 713.2 836.3 717.7 829.6 723.2C822.9 728.7 815.0 735.1 807.1 741.0C799.2 746.9 790.4 752.7 782.0 758.5C773.6 764.3 765.3 771.0 757.0 776.0C748.7 781.0 739.5 784.3 732.0 788.5C724.5 792.7 718.6 796.9 711.9 801.1C705.2 805.3 699.4 809.9 691.9 813.6C684.4 817.4 675.2 820.7 666.8 823.6C658.5 826.5 651.0 828.7 641.8 831.2C632.6 833.7 620.8 835.9 611.6 838.6C602.4 841.3 593.9 845.2 586.6 847.4C579.3 849.6 575.5 850.2 567.6 851.9C559.7 853.6 548.6 855.2 539.1 857.6C529.6 860.0 520.2 862.9 510.6 866.2C501.0 869.5 491.2 874.3 481.6 877.6C472.1 880.9 462.8 883.3 453.3 886.2C443.8 889.1 434.2 891.5 424.6 894.8C415.1 898.1 405.5 902.0 396.0 906.2C386.5 910.4 376.0 915.9 367.4 920.2C358.8 924.5 348.4 930.0 344.6 932.0" stroke="#f4f4f4" stroke-width="1.6" opacity="0.36"/>
<path d="M700.0 808.0C693.3 811.0 672.8 819.7 660.0 826.0C647.2 832.3 634.0 840.7 623.0 846.0C612.0 851.3 603.5 854.0 594.0 858.0C584.5 862.0 575.5 865.7 566.0 870.0C556.5 874.3 546.5 879.9 537.0 884.0C527.5 888.1 521.3 890.4 509.0 894.5C496.7 898.6 476.4 904.0 463.0 908.8C449.6 913.5 439.3 917.8 428.8 923.0C418.3 928.2 409.5 932.8 400.0 940.0C390.5 947.2 376.3 961.7 371.6 966.0" stroke="#2b2b2b" stroke-width="2.2" opacity="0.75"/>
<path d="M701.6 810.7C694.9 813.7 674.4 822.4 661.6 828.7C648.8 835.0 635.6 843.4 624.6 848.7C613.6 854.0 605.1 856.7 595.6 860.7C586.1 864.7 577.1 868.4 567.6 872.7C558.1 877.0 548.1 882.6 538.6 886.7C529.1 890.8 522.9 893.1 510.6 897.2C498.3 901.3 478.0 906.8 464.6 911.5C451.2 916.2 440.9 920.5 430.4 925.7C419.9 930.9 411.1 935.5 401.6 942.7C392.1 949.9 377.9 964.4 373.2 968.7" stroke="#f4f4f4" stroke-width="1.6" opacity="0.30"/>
<path d="M1070.5 492.6C1065.9 497.2 1051.8 511.3 1043.0 520.0C1034.2 528.7 1025.5 536.7 1018.0 545.0C1010.5 553.3 1005.1 561.7 998.0 570.0C990.9 578.3 983.4 585.8 975.4 595.0C967.4 604.2 959.5 614.5 950.3 625.0C941.1 635.5 925.3 652.5 920.3 658.0" stroke="#2b2b2b" stroke-width="1.6" opacity="0.45"/>
<path d="M1072.1 495.0C1067.5 499.6 1053.3 513.7 1044.6 522.4C1035.8 531.1 1027.1 539.1 1019.6 547.4C1012.1 555.7 1006.7 564.1 999.6 572.4C992.5 580.7 985.0 588.2 977.0 597.4C969.0 606.6 961.1 616.9 951.9 627.4C942.7 637.9 926.9 654.9 921.9 660.4" stroke="#f4f4f4" stroke-width="1.6" opacity="0.18"/>
<path d="M1180.0 495.0C1173.8 499.2 1151.2 509.2 1143.0 520.0C1134.8 530.8 1139.0 548.3 1130.7 560.0C1122.4 571.7 1105.6 582.5 1093.0 590.0C1080.4 597.5 1065.4 600.8 1055.0 605.0C1044.6 609.2 1040.8 611.2 1030.5 615.0C1020.2 618.8 1005.6 622.9 993.0 628.0C980.4 633.1 961.3 642.5 955.0 645.4" stroke="#2b2b2b" stroke-width="1.6" opacity="0.40"/>
<path d="M1181.6 497.4C1175.4 501.6 1152.8 511.6 1144.6 522.4C1136.4 533.2 1140.6 550.7 1132.3 562.4C1124.0 574.1 1107.2 584.9 1094.6 592.4C1082.0 599.9 1067.0 603.2 1056.6 607.4C1046.2 611.6 1042.4 613.6 1032.1 617.4C1021.8 621.2 1007.2 625.3 994.6 630.4C982.0 635.5 962.9 644.9 956.6 647.8" stroke="#f4f4f4" stroke-width="1.6" opacity="0.16"/>
<path d="M1288.0 352.0C1285.3 357.0 1276.7 371.5 1272.0 382.0C1267.3 392.5 1263.1 404.9 1259.8 415.0C1256.5 425.1 1252.5 435.3 1252.0 442.8C1251.5 450.3 1256.2 457.1 1257.0 460.0" stroke="#2b2b2b" stroke-width="2.2" opacity="0.45"/>
<path d="M1289.6 354.7C1286.9 359.7 1278.3 374.2 1273.6 384.7C1268.9 395.2 1264.7 407.6 1261.4 417.7C1258.1 427.8 1254.1 438.0 1253.6 445.5C1253.1 453.0 1257.8 459.8 1258.6 462.7" stroke="#f4f4f4" stroke-width="1.6" opacity="0.18"/>
<path d="M690.0 700.0C692.7 707.5 700.2 730.3 706.0 745.0C711.8 759.7 721.8 780.8 725.0 788.0" stroke="#2b2b2b" stroke-width="1.4" opacity="0.50"/>
<path d="M1207.0 182.5C1208.0 186.6 1210.5 200.4 1212.7 207.0C1214.9 213.6 1220.3 217.3 1220.0 222.0C1219.7 226.7 1213.3 231.9 1210.8 235.0C1208.3 238.1 1206.0 239.8 1205.0 240.8" stroke="#2b2b2b" stroke-width="2.4" opacity="0.70"/>
<path d="M1208.6 185.3C1209.5 189.4 1212.1 203.2 1214.3 209.8C1216.5 216.4 1221.9 220.1 1221.6 224.8C1221.3 229.5 1214.9 234.7 1212.4 237.8C1209.9 240.9 1207.6 242.6 1206.6 243.6" stroke="#f4f4f4" stroke-width="1.6" opacity="0.28"/>
<path d="M1299.0 184.4C1298.4 186.6 1297.9 192.9 1295.4 197.6C1292.9 202.3 1288.4 207.9 1284.0 212.6C1279.6 217.3 1274.0 221.1 1269.0 225.8C1264.0 230.5 1258.4 236.1 1254.0 240.8C1249.6 245.5 1246.0 250.0 1242.8 254.0C1239.6 258.0 1236.3 263.2 1235.0 265.0" stroke="#2b2b2b" stroke-width="1.8" opacity="0.50"/>
<path d="M1300.6 186.9C1300.0 189.1 1299.5 195.4 1297.0 200.1C1294.5 204.8 1290.0 210.4 1285.6 215.1C1281.2 219.8 1275.6 223.6 1270.6 228.3C1265.6 233.0 1260.0 238.6 1255.6 243.3C1251.2 248.0 1247.6 252.5 1244.4 256.5C1241.2 260.5 1237.9 265.7 1236.6 267.5" stroke="#f4f4f4" stroke-width="1.6" opacity="0.20"/>
<path d="M1180.8 188.0C1179.7 190.5 1176.5 198.0 1174.0 203.0C1171.5 208.0 1167.2 215.5 1165.8 218.0" stroke="#2b2b2b" stroke-width="1.4" opacity="0.50"/>
<path d="M757.0 913.0L758.0 926.0" stroke="#2b2b2b" stroke-width="3.4" opacity="0.70"/>
<path d="M758.6 916.3L759.6 929.3" stroke="#f4f4f4" stroke-width="1.6" opacity="0.28"/>
<path d="M1100.0 778.0L1101.0 792.0" stroke="#2b2b2b" stroke-width="3.2" opacity="0.45"/>
<path d="M1101.6 781.2L1102.6 795.2" stroke="#f4f4f4" stroke-width="1.6" opacity="0.18"/>
<path d="M855.0 634.0L862.0 640.0" stroke="#2b2b2b" stroke-width="2.4" opacity="0.70"/>
<path d="M856.6 636.8L863.6 642.8" stroke="#f4f4f4" stroke-width="1.6" opacity="0.28"/>
<path d="M1232.0 580.0C1227.8 582.0 1215.3 587.0 1207.0 592.0C1198.7 597.0 1189.0 603.7 1182.0 610.0C1175.0 616.3 1171.2 623.3 1165.0 630.0C1158.8 636.7 1152.5 643.0 1145.0 650.0C1137.5 657.0 1128.3 665.3 1120.0 672.0C1111.7 678.7 1103.3 684.5 1095.0 690.0C1086.7 695.5 1080.5 700.0 1070.0 705.0C1059.5 710.0 1043.3 716.2 1032.0 720.0C1020.7 723.8 1007.0 726.7 1002.0 728.0" stroke="#2b2b2b" stroke-width="1.6" opacity="0.35"/>
<path d="M1233.6 582.4C1229.4 584.4 1216.9 589.4 1208.6 594.4C1200.3 599.4 1190.6 606.1 1183.6 612.4C1176.6 618.7 1172.8 625.7 1166.6 632.4C1160.4 639.1 1154.1 645.4 1146.6 652.4C1139.1 659.4 1129.9 667.7 1121.6 674.4C1113.3 681.1 1104.9 686.9 1096.6 692.4C1088.3 697.9 1082.1 702.4 1071.6 707.4C1061.1 712.4 1044.9 718.6 1033.6 722.4C1022.3 726.2 1008.6 729.1 1003.6 730.4" stroke="#f4f4f4" stroke-width="1.6" opacity="0.14"/>
<path d="M1220.0 627.0C1213.8 631.2 1195.5 642.8 1183.0 652.0C1170.5 661.2 1157.7 673.2 1145.0 682.0C1132.3 690.8 1119.5 697.5 1107.0 705.0C1094.5 712.5 1081.7 720.3 1070.0 727.0C1058.3 733.7 1042.5 742.0 1037.0 745.0" stroke="#2b2b2b" stroke-width="1.4" opacity="0.30"/>
</g>
<g fill="none" stroke-linejoin="round" stroke-linecap="round" filter="url(#b0)">
<path d="M1296.0 331.0C1299.7 329.3 1310.7 324.3 1318.0 321.0C1325.3 317.7 1332.5 314.8 1340.0 311.0C1347.5 307.2 1354.7 302.5 1363.0 298.0C1371.3 293.5 1380.5 288.7 1390.0 284.0C1399.5 279.3 1410.0 274.7 1420.0 270.0C1430.0 265.3 1441.7 259.8 1450.0 256.0C1458.3 252.2 1466.7 248.5 1470.0 247.0" stroke="#f4f4f4" stroke-width="7.0" opacity="0.95"/>
<path d="M1300.0 335.0C1303.7 333.5 1314.5 329.2 1322.0 326.0C1329.5 322.8 1337.3 319.8 1345.0 316.0C1352.7 312.2 1359.7 307.5 1368.0 303.0C1376.3 298.5 1385.5 293.7 1395.0 289.0C1404.5 284.3 1415.5 279.5 1425.0 275.0C1434.5 270.5 1447.5 264.2 1452.0 262.0" stroke="#8a8a8a" stroke-width="2.0" opacity="0.50"/>
<path d="M1470.0 247.0C1471.7 245.0 1477.0 239.5 1480.0 235.0C1483.0 230.5 1485.2 225.3 1488.0 220.0C1490.8 214.7 1493.9 207.7 1497.0 203.0C1500.1 198.3 1503.2 195.2 1506.7 192.0C1510.2 188.8 1516.1 184.9 1518.0 183.5" stroke="#fafafa" stroke-width="5.5" opacity="0.95"/>
<path d="M1476.0 250.0C1477.7 248.0 1483.0 242.7 1486.0 238.0C1489.0 233.3 1491.2 227.3 1494.0 222.0C1496.8 216.7 1500.0 210.5 1503.0 206.0C1506.0 201.5 1510.5 196.8 1512.0 195.0" stroke="#8a8a8a" stroke-width="1.6" opacity="0.40"/>
<path d="M1193.0 257.6C1189.2 261.3 1177.6 274.6 1170.5 280.0C1163.4 285.4 1158.0 286.7 1150.5 290.0C1143.0 293.3 1133.8 296.7 1125.4 300.0C1117.1 303.3 1108.0 307.5 1100.4 310.0C1092.8 312.5 1085.1 312.5 1080.0 315.0C1074.9 317.5 1075.0 321.2 1070.0 325.0C1065.0 328.8 1055.8 333.2 1050.0 337.8C1044.2 342.4 1040.0 347.8 1035.0 352.8C1030.0 357.8 1024.2 362.9 1020.0 367.9C1015.8 372.9 1014.2 377.5 1010.0 382.9C1005.8 388.3 1000.0 394.1 995.0 400.4C990.0 406.6 984.2 414.5 980.0 420.4C975.8 426.2 972.9 429.6 970.0 435.5C967.1 441.4 964.2 449.8 962.6 455.5C961.0 461.2 961.5 463.4 960.3 470.0C959.1 476.6 958.6 487.5 955.3 495.0C952.0 502.5 943.6 507.5 940.3 515.0C937.0 522.5 938.6 530.8 935.3 540.0C932.0 549.2 925.3 560.0 920.3 570.0C915.3 580.0 909.0 590.8 905.2 600.0C901.4 609.2 900.2 617.5 897.7 625.0C895.2 632.5 891.3 641.7 890.0 645.0" stroke="#3a3a3a" stroke-width="9.0" opacity="0.22"/>
<path d="M1180.0 292.0C1173.3 294.7 1153.3 303.0 1140.0 308.0C1126.7 313.0 1111.3 317.0 1100.0 322.0C1088.7 327.0 1080.7 332.0 1072.0 338.0C1063.3 344.0 1055.0 351.0 1048.0 358.0C1041.0 365.0 1036.0 372.3 1030.0 380.0C1024.0 387.7 1017.7 395.7 1012.0 404.0C1006.3 412.3 1000.7 421.3 996.0 430.0C991.3 438.7 987.3 447.3 984.0 456.0C980.7 464.7 979.0 473.0 976.0 482.0C973.0 491.0 967.7 505.3 966.0 510.0" stroke="#fff" stroke-width="6.0" opacity="0.30"/>
<path d="M1284.0 344.0C1281.3 348.3 1272.7 360.7 1268.0 370.0C1263.3 379.3 1259.3 390.0 1256.0 400.0C1252.7 410.0 1249.8 421.3 1248.0 430.0C1246.2 438.7 1245.5 448.3 1245.0 452.0" stroke="#fff" stroke-width="8.0" opacity="0.32"/>
<path d="M1258.0 464.0C1262.5 462.7 1276.7 459.7 1285.0 456.0C1293.3 452.3 1301.3 445.7 1308.0 442.0C1314.7 438.3 1319.3 434.8 1325.0 434.0C1330.7 433.2 1339.2 436.5 1342.0 437.0" stroke="#fff" stroke-width="7.0" opacity="0.42"/>
<path d="M1280.0 352.0C1275.0 360.0 1259.7 383.3 1250.0 400.0C1240.3 416.7 1230.3 435.0 1222.0 452.0C1213.7 469.0 1207.7 487.3 1200.0 502.0C1192.3 516.7 1184.3 527.3 1176.0 540.0C1167.7 552.7 1154.3 571.7 1150.0 578.0" stroke="#fff" stroke-width="11.0" opacity="0.16"/>
</g>
<g fill="none"><path d="M338.0 858.0 L520.0 722.0" stroke="#5a5a5a" stroke-width=".8" opacity="0.45"/><path d="M339.9 856.8 L528.3 718.6" stroke="#fafafa" stroke-width=".8" opacity="0.47"/><path d="M341.8 855.5 L536.7 715.1" stroke="#5a5a5a" stroke-width=".8" opacity="0.49"/><path d="M343.7 854.3 L545.0 711.7" stroke="#fafafa" stroke-width=".8" opacity="0.51"/><path d="M345.6 853.0 L553.3 708.3" stroke="#5a5a5a" stroke-width=".8" opacity="0.53"/><path d="M347.5 851.8 L561.7 704.9" stroke="#fafafa" stroke-width=".8" opacity="0.55"/><path d="M349.4 850.6 L570.0 701.4" stroke="#5a5a5a" stroke-width=".8" opacity="0.56"/><path d="M351.3 849.3 L578.3 698.0" stroke="#fafafa" stroke-width=".8" opacity="0.58"/><path d="M353.2 848.1 L586.7 694.6" stroke="#5a5a5a" stroke-width=".8" opacity="0.60"/><path d="M355.1 846.9 L595.0 691.1" stroke="#fafafa" stroke-width=".8" opacity="0.62"/><path d="M357.0 845.6 L603.3 687.7" stroke="#5a5a5a" stroke-width=".8" opacity="0.64"/><path d="M359.0 844.4 L611.7 684.3" stroke="#fafafa" stroke-width=".8" opacity="0.66"/><path d="M360.9 843.1 L620.0 680.9" stroke="#5a5a5a" stroke-width=".8" opacity="0.68"/><path d="M362.8 841.9 L628.3 677.4" stroke="#fafafa" stroke-width=".8" opacity="0.70"/><path d="M364.7 840.7 L636.7 674.0" stroke="#5a5a5a" stroke-width=".8" opacity="0.72"/><path d="M366.6 839.4 L645.0 670.6" stroke="#fafafa" stroke-width=".8" opacity="0.74"/><path d="M368.5 838.2 L653.3 667.1" stroke="#5a5a5a" stroke-width=".8" opacity="0.75"/><path d="M370.4 837.0 L661.7 663.7" stroke="#fafafa" stroke-width=".8" opacity="0.77"/><path d="M372.3 835.7 L670.0 660.3" stroke="#5a5a5a" stroke-width=".8" opacity="0.79"/><path d="M374.2 834.5 L678.3 656.9" stroke="#fafafa" stroke-width=".8" opacity="0.81"/><path d="M376.1 833.2 L686.7 653.4" stroke="#5a5a5a" stroke-width=".8" opacity="0.83"/><path d="M378.0 832.0 L695.0 650.0" stroke="#fafafa" stroke-width=".8" opacity="0.85"/><path d="M690.0 655.0 L885.0 462.0" stroke="#6a6a6a" stroke-width=".8" opacity=".55"/><path d="M687.0 654.1 L882.0 461.1" stroke="#f4f4f4" stroke-width=".8" opacity=".55"/><path d="M683.0 652.9 L878.0 459.9" stroke="#777" stroke-width=".8" opacity=".55"/><path d="M679.0 651.7 L874.0 458.7" stroke="#eee" stroke-width=".8" opacity=".55"/><path d="M778 577 L858 638" stroke="#7d7d7d" stroke-width="3" stroke-dasharray="5 4" opacity=".6"/><path d="M780 574 L860 635" stroke="#e6e6e6" stroke-width="1.6" stroke-dasharray="5 4" opacity=".7"/><path d="M673.0 677.5L593.0 748.5" stroke="#111" stroke-width="1.3" opacity="0.90"/><path d="M673.5 680.0L593.5 751.0" stroke="#fff" stroke-width="1.8" opacity="1.00"/><path d="M1395.0 181.4L1522.0 181.4" stroke="#111" stroke-width="1.6" opacity="0.90"/><path d="M1184.0 181.5L1395.0 181.5" stroke="#555" stroke-width="1.0" opacity="0.45"/><path d="M1551.7 197.6L1521.7 261.4" stroke="#777" stroke-width="1.0" opacity="0.45"/><path d="M1546.0 200.0L1519.0 256.0" stroke="#ddd" stroke-width="1.0" opacity="0.50"/><path d="M1508.5 276.5L1465.0 363.0" stroke="#e2e2e2" stroke-width="1.1" opacity="0.80"/><path d="M739.0 950.0L1100.0 830.0" stroke="#111" stroke-width="1.1" opacity="0.85"/><path d="M745.0 951.5L1100.0 833.0" stroke="#f6f6f6" stroke-width="1.1" opacity="0.90"/><path d="M770.0 946.0L1090.0 839.0" stroke="#1a1a1a" stroke-width="1.0" opacity="0.80"/><path d="M790.0 942.0L1080.0 846.0" stroke="#f0f0f0" stroke-width="1.0" opacity="0.80"/><path d="M860.0 918.0L1060.0 853.0" stroke="#333" stroke-width="1.0" opacity="0.70"/><path d="M880.0 915.0L1050.0 860.0" stroke="#eee" stroke-width="1.0" opacity="0.60"/><path d="M514.6 1052.8L700.0 970.0" stroke="#222" stroke-width="1.1" opacity="0.60"/><path d="M516.0 1056.0L705.0 972.0" stroke="#f2f2f2" stroke-width="1.4" opacity="0.80"/><path d="M520.0 1062.0L700.0 988.0" stroke="#e6e6e6" stroke-width="1.2" opacity="0.60"/><path d="M1165.0 748.0L1240.0 668.0" stroke="#f4f4f4" stroke-width="1.3" opacity="0.80"/><path d="M1240.0 668.0L1330.0 570.0" stroke="#e4e4e4" stroke-width="1.1" opacity="0.50"/></g>
</g>
<polygon points="1178.6,218.0 1385.7,412.1 1327.0,566.0 1158.6,749.9 1040.3,799.8 803.5,586.1 987.7,337.6" fill="#dc4f7c" fill-opacity="0.5" stroke="#6a5560" stroke-opacity=".7" stroke-width=".7"/>

<polygon points="1166.9,222.8 1394.4,424.0 1334.0,564.2 1160.8,749.9 479.2,1076.0 333.6,862.0 644.9,735.8 841.0,521.0 987.7,337.6" fill="none" stroke="#1f7f1f" stroke-width="1.1"/>
<polygon points="1171.9,233.8 1357.2,402.0 1304.1,571.7 1144.1,734.1 491.4,1059.7 354.2,858.1 656.7,746.3 803.5,588.3 997.3,339.4" fill="none" stroke="#1c1c1c" stroke-width="1"/>
<polygon points="340.2,851.5 368.7,844.1 513.4,1057.6 492.3,1074.2" fill="none" stroke="#1a1ad2" stroke-width="1.1"/>
<g transform="translate(825.4,305.2) scale(1.16)" fill="#fff" stroke="#444" stroke-width="0.85" stroke-linejoin="round"><path d="M-3.2 7.5 C-4.5 5.5 -6 3.2 -6.6 2 C-7.1 1 -5.8 0.2 -4.9 1.2 L-3.3 3 V-4.6 C-3.3 -5.9 -1.5 -5.9 -1.5 -4.6 V-6 C-1.5 -7.3 0.4 -7.3 0.4 -6 V-5.4 C0.4 -6.7 2.3 -6.7 2.3 -5.4 V-4 C2.3 -5.2 4.1 -5.2 4.1 -4 V3 C4.1 5 3.6 6.2 3 7.5 Z"/><path d="M-1.5 -4.6V0.5M0.4 -5.5V0.5M2.3 -4.8V0.5" fill="none"/></g>
<g transform="translate(950.2,322.8) scale(1.16)" fill="#fff" stroke="#444" stroke-width="0.85" stroke-linejoin="round"><path d="M-3.2 7.5 C-4.5 5.5 -6 3.2 -6.6 2 C-7.1 1 -5.8 0.2 -4.9 1.2 L-3.3 3 V-4.6 C-3.3 -5.9 -1.5 -5.9 -1.5 -4.6 V-6 C-1.5 -7.3 0.4 -7.3 0.4 -6 V-5.4 C0.4 -6.7 2.3 -6.7 2.3 -5.4 V-4 C2.3 -5.2 4.1 -5.2 4.1 -4 V3 C4.1 5 3.6 6.2 3 7.5 Z"/><path d="M-1.5 -4.6V0.5M0.4 -5.5V0.5M2.3 -4.8V0.5" fill="none"/></g>
</svg>
<div class="a" style="left:0;top:0;width:1600px;height:19px;background:#eef3f8"></div>
<div class="a" style="left:0;top:19px;width:1600px;height:20px;background:#fefefe"></div>
<div class="a" style="left:652px;top:22px;width:948px;height:6px;background:#eef3f8"></div>
<div class="a" style="left:480px;top:35.5px;width:1120px;height:1px;background:#ececec"></div>
<span class="t l" style="left:19.6px;top:4.1px;font-size:11.6px;letter-spacing:-0.477px;color:#1a1a1a;">DamBreach</span>
<span class="t l" style="left:81.2px;top:4.1px;font-size:11.6px;color:#1a1a1a;transform:scaleX(.92);transform-origin:0 0;">—</span>
<span class="t l" style="left:95.8px;top:4.1px;font-size:11.6px;letter-spacing:-1.200px;color:#1a1a1a;">QGIS</span>
<svg class="a" style="left:1px;top:3px" width="17" height="17" viewBox="0 0 17 17"><circle cx="7.6" cy="7.8" r="5.2" fill="none" stroke="#5e9a32" stroke-width="3"/><path d="M2.6 6.2A5.2 5.2 0 0 1 11.4 4.2" fill="none" stroke="#c4a82c" stroke-width="3"/><path d="M8.4 8.6L15 15.4" stroke="#5e9a32" stroke-width="3"/><path d="M9.4 9.4L15.6 14.6" stroke="#eef3f8" stroke-width=".8"/><path d="M6 6L9.4 7.4L7.4 9.4Z" fill="#e8a23a"/></svg>
<span class="t" style="left:7.8px;top:24.2px;font-size:11.2px;letter-spacing:0.053px;color:#000;">Pro<u>j</u>ect</span>
<span class="t" style="left:56.7px;top:24.2px;font-size:11.2px;letter-spacing:-0.124px;color:#000;"><u>E</u>dit</span>
<span class="t" style="left:88.3px;top:24.2px;font-size:11.2px;letter-spacing:-0.287px;color:#000;"><u>V</u>iew</span>
<span class="t" style="left:124.4px;top:24.2px;font-size:11.2px;letter-spacing:-0.476px;color:#000;"><u>L</u>ayer</span>
<span class="t" style="left:164.0px;top:24.2px;font-size:11.2px;letter-spacing:-0.070px;color:#000;"><u>S</u>ettings</span>
<span class="t" style="left:219.7px;top:24.2px;font-size:11.2px;letter-spacing:-0.146px;color:#000;"><u>P</u>lugins</span>
<span class="t" style="left:269.2px;top:24.2px;font-size:11.2px;letter-spacing:0.009px;color:#000;">Vect<u>o</u>r</span>
<span class="t" style="left:315.2px;top:24.2px;font-size:11.2px;letter-spacing:-0.339px;color:#000;"><u>R</u>aster</span>
<span class="t" style="left:360.5px;top:24.2px;font-size:11.2px;letter-spacing:-0.199px;color:#000;"><u>D</u>atabase</span>
<span class="t" style="left:422.8px;top:24.2px;font-size:11.2px;letter-spacing:0.405px;color:#000;"><u>W</u>eb</span>
<span class="t" style="left:457.9px;top:24.2px;font-size:11.2px;letter-spacing:-0.190px;color:#000;"><u>M</u>esh</span>
<span class="t" style="left:497.5px;top:24.2px;font-size:11.2px;letter-spacing:0.289px;color:#000;">HCMGIS</span>
<span class="t" style="left:554.4px;top:24.2px;font-size:11.2px;letter-spacing:-0.172px;color:#000;">Pro<u>c</u>essing</span>
<span class="t" style="left:623.3px;top:24.2px;font-size:11.2px;letter-spacing:-0.172px;color:#000;"><u>H</u>elp</span>
<div class="hl" style="top:39.0px"></div>
<div class="hl" style="top:67.6px"></div>
<div class="hl" style="top:95.8px"></div>
<div class="hl" style="top:123.8px"></div>
<div class="hl" style="top:152.0px"></div>
<svg class="a" style="left:0;top:0" width="1000" height="156" viewBox="0 0 1000 156">
<g transform="translate(6.0,54.0)" ><path d="M-0.9 -6v12M1.1 -6v12" stroke="#e2e2e2" stroke-width="1" stroke-dasharray="1.5 1.5" fill="none"/></g>
<g transform="translate(22.5,54.0)" ><path d="M-5.5 -7.5H2L6 -3.5V7.5H-5.5Z" fill="#fdfdfd" stroke="#8a8a8a" stroke-width="1"/><path d="M2 -7.5V-3.5H6" fill="#eee" stroke="#8a8a8a" stroke-width=".9"/></g>
<g transform="translate(45.5,54.0)" ><path d="M-8 -5.5H-2.5L-1 -3.8H6.5V6H-8Z" fill="#e9b92c"/><path d="M-8 6L-5.8 -1.6H8.2L6.5 6Z" fill="#f7d95c"/><path d="M-8 -5.5H-2.5L-1 -3.8H6.5V-1.6" fill="none" stroke="#d6a41c" stroke-width=".8"/></g>
<g transform="translate(67.5,54.0)" ><rect x="-7.3" y="-7.3" width="14.6" height="14.6" rx="1.6" fill="#5f8fc6" stroke="#3f6ca6" stroke-width="1"/><rect x="-4.6" y="-5.6" width="9.2" height="5.4" fill="#9a9a9a" stroke="#e9eef4" stroke-width=".9"/><rect x="-3.4" y="2.6" width="7.2" height="3.6" rx=".6" fill="#f4f6f8"/><rect x="-2.6" y="3.3" width="2" height="2.2" fill="#333"/></g>
<g transform="translate(90.5,54.0)" ><path d="M-8 -7H-1L1 -5.3H2.6L6.4 -1.5V7H-8Z" fill="#e9c441" stroke="#c69d1c" stroke-width=".8"/><path d="M-1.5 -7.4H3L7 -3.4V6.5H-1.5Z" fill="#fafafa" stroke="#9a9a9a" stroke-width=".8"/><path d="M-8 -7H-5.5V6.8H-8Z" fill="#d9ae28"/><g transform="translate(4.4,4.4)"><rect x="-3.6" y="-3.6" width="7.2" height="7.2" rx="1" fill="#ecca3c" stroke="#c8a21a" stroke-width=".9"/><path d="M0 -2.5V2.5M-2.5 0H2.5M-1.8 -1.8L1.8 1.8M-1.8 1.8L1.8 -1.8" stroke="#fffdf0" stroke-width=".8"/><circle r="1" fill="#ecca3c"/></g></g>
<g transform="translate(113.5,54.0)" ><path d="M-7.5 -6.5H3L7 -2.5V6H-7.5Z" fill="#f6f6f6" stroke="#8d8d8d" stroke-width="1"/><path d="M3 -6.5V-2.5H7" fill="#e6e6e6" stroke="#8d8d8d" stroke-width=".8"/><path d="M-2.6 -3.6a2.6 2.6 0 1 0 3.4 3.2L5.6 6.3" stroke="#9a9a9a" stroke-width="2.6" fill="none" stroke-linecap="round"/><path d="M1.6 1.6L6 6.6" stroke="#e3b83a" stroke-width="2.2" stroke-linecap="round"/><path d="M-2.6 -3.6a2.6 2.6 0 1 0 3.4 3.2" stroke="#7d7d7d" stroke-width="1.1" fill="none"/></g>
<g transform="translate(136.0,54.0)" ><circle cx="-3.6" cy="-4.2" r="3.4" fill="#e0622a"/><rect x="-7" y="1" width="6.6" height="6.4" fill="#79aa73" stroke="#5a8f55" stroke-width=".8"/><path d="M2 -2.2L7 -6.6" stroke="#4a7ab8" stroke-width="2" stroke-linecap="round"/><text x="1.2" y="7.4" font-family="Liberation Sans, sans-serif" font-size="9.5" fill="#555">a</text></g>
<g transform="translate(156.5,54.0)" ><path d="M-0.9 -6v12M1.1 -6v12" stroke="#e2e2e2" stroke-width="1" stroke-dasharray="1.5 1.5" fill="none"/></g>
<g transform="translate(173.0,54.0)" ><rect x="-11" y="-11" width="22" height="22" rx="1.5" fill="#dfdfdf" stroke="#c6c6c6" stroke-width="1"/><path d="M-2.8 8 C-4.2 5.8 -6.2 3.4 -7 1.9 C-7.6 0.7 -6 -0.3 -4.9 0.9 L-3.5 2.6 V-5 C-3.5 -6.5 -1.5 -6.5 -1.5 -5 V-6.6 C-1.5 -8.1 0.6 -8.1 0.6 -6.6 V-5.8 C0.6 -7.3 2.7 -7.3 2.7 -5.8 V-4.2 C2.7 -5.6 4.7 -5.6 4.7 -4.2 V3 C4.7 5.2 4.1 6.6 3.4 8 Z" fill="#fff" stroke="#222" stroke-width="1" stroke-linejoin="round"/><path d="M-1.5 -5V0.6M0.6 -6V0.6M2.7 -5.2V0.6" fill="none" stroke="#222" stroke-width=".9"/></g>
<g transform="translate(195.5,54.0)" ><rect x="-5.2" y="-5.2" width="10.4" height="10.4" rx="1" fill="#f3d544" stroke="#d7b21e" stroke-width=".8"/><path d="M0 -8.6L2.9 -5.2H1.1V-2.6H-1.1V-5.2H-2.9ZM0 8.6L2.9 5.2H1.1V2.6H-1.1V5.2H-2.9ZM-8.6 0L-5.2 -2.9V-1.1H-2.6V1.1H-5.2V2.9ZM8.6 0L5.2 -2.9V-1.1H2.6V1.1H5.2V2.9Z" fill="#4f82c0" stroke="#3666a4" stroke-width=".6"/></g>
<g transform="translate(218.0,54.0)" ><path d="M-2.6 2.6L-7.3 7.3" stroke="#2e2e2e" stroke-width="2.6" stroke-linecap="round"/><path d="M-3.6 3.6L-6.9 6.9" stroke="#e8c04a" stroke-width="1.5" stroke-linecap="round"/><circle cx="2" cy="-2" r="5.4" fill="#f4f6f8" stroke="#6f6f6f" stroke-width="1.1"/><path d="M2 -5.3V1.3M-1.3 -2H5.3" stroke="#5b8dc9" stroke-width="2.3"/></g>
<g transform="translate(240.5,54.0)" ><path d="M-2.6 2.6L-7.3 7.3" stroke="#2e2e2e" stroke-width="2.6" stroke-linecap="round"/><path d="M-3.6 3.6L-6.9 6.9" stroke="#e8c04a" stroke-width="1.5" stroke-linecap="round"/><circle cx="2" cy="-2" r="5.4" fill="#f4f6f8" stroke="#6f6f6f" stroke-width="1.1"/><path d="M-1.3 -2H5.3" stroke="#5b8dc9" stroke-width="2.3"/></g>
<g transform="translate(263.5,54.0)" ><path d="M-2.6 2.6L-7.3 7.3" stroke="#2e2e2e" stroke-width="2.6" stroke-linecap="round"/><path d="M-3.6 3.6L-6.9 6.9" stroke="#e8c04a" stroke-width="1.5" stroke-linecap="round"/><circle cx="1.5" cy="-1" r="4.2" fill="#e8e8e8" stroke="#9a9a9a" stroke-width=".9"/><path d="M-5.6 -8H-1L-2.6 -6.4L-0.8 -4.6L-2.4 -3L-4.2 -4.8L-5.6 -3.4Z M8 -8V-3.4L6.4 -5L4.6 -3.2L3 -4.8L4.8 -6.6L3.4 -8Z M8 7V2.4L6.4 4L4.8 2.4L3.2 4L4.8 5.6L3.4 7Z" fill="#4f82c0" stroke="#3a69a8" stroke-width=".5"/></g>
<g transform="translate(286.0,54.0)" ><rect x="-7.4" y="-6.6" width="7" height="9.6" fill="#f2d340" stroke="#d3ae1a" stroke-width=".7"/><path d="M-2.6 2.6L-7.3 7.3" stroke="#2e2e2e" stroke-width="2.6" stroke-linecap="round"/><path d="M-3.6 3.6L-6.9 6.9" stroke="#e8c04a" stroke-width="1.5" stroke-linecap="round"/><circle cx="2" cy="-2" r="5.4" fill="#ececec" stroke="#6f6f6f" stroke-width="1.1"/></g>
<g transform="translate(309.0,54.0)" ><rect x="-7.4" y="-6.2" width="7" height="8.6" fill="#e0e0e0" stroke="#8e8e8e" stroke-width=".9"/><path d="M-2.6 2.6L-7.3 7.3" stroke="#2e2e2e" stroke-width="2.6" stroke-linecap="round"/><path d="M-3.6 3.6L-6.9 6.9" stroke="#e8c04a" stroke-width="1.5" stroke-linecap="round"/><circle cx="2" cy="-2" r="5.4" fill="#efefef" stroke="#6f6f6f" stroke-width="1.1"/><path d="M2 -6V2" stroke="#d0d0d0" stroke-width="1.2"/></g>
<g transform="translate(331.0,54.0)" ><path d="M-2.6 2.6L-7.3 7.3" stroke="#d0d0d0" stroke-width="2.6" stroke-linecap="round"/><path d="M-3.6 3.6L-6.9 6.9" stroke="#e0e0e0" stroke-width="1.5" stroke-linecap="round"/><circle cx="2" cy="-2" r="5.4" fill="#f1f1f1" stroke="#c4c4c4" stroke-width="1.1"/><text x="2" y="0.6" text-anchor="middle" font-family="Liberation Sans, sans-serif" font-size="6.5" font-weight="bold" fill="#c6c6c6">1:1</text></g>
<g transform="translate(354.0,54.0)" ><path d="M-2.6 2.6L-7.3 7.3" stroke="#d0d0d0" stroke-width="2.6" stroke-linecap="round"/><path d="M-3.6 3.6L-6.9 6.9" stroke="#e0e0e0" stroke-width="1.5" stroke-linecap="round"/><circle cx="2" cy="-2" r="5.4" fill="#f7f7f7" stroke="#c4c4c4" stroke-width="1.1"/><rect x="1" y="1.2" width="7" height="6.6" fill="#dcdcdc"/><path d="M6.4 2.2L2.6 4.5L6.4 6.8Z" fill="#f8f8f8"/></g>
<g transform="translate(377.0,54.0)" ><path d="M-2.6 2.6L-7.3 7.3" stroke="#d0d0d0" stroke-width="2.6" stroke-linecap="round"/><path d="M-3.6 3.6L-6.9 6.9" stroke="#e0e0e0" stroke-width="1.5" stroke-linecap="round"/><circle cx="2" cy="-2" r="5.4" fill="#f7f7f7" stroke="#c4c4c4" stroke-width="1.1"/><rect x="1" y="1.2" width="7" height="6.6" fill="#dcdcdc"/><path d="M2.8 2.2L6.6 4.5L2.8 6.8Z" fill="#f8f8f8"/></g>
<g transform="translate(400.0,54.0)" ><path d="M-7.6 -7H5V5.6H-5.4C-6.8 5.6 -7.6 4.8 -7.6 3.6Z" fill="#e6e6e6" stroke="#a8a8a8" stroke-width="1"/><path d="M-5.6 -7V5" stroke="#b8b8b8" stroke-width="1"/><g transform="translate(4.6,4.4)"><rect x="-3.6" y="-3.6" width="7.2" height="7.2" rx="1" fill="#ecca3c" stroke="#c8a21a" stroke-width=".9"/><path d="M0 -2.5V2.5M-2.5 0H2.5M-1.8 -1.8L1.8 1.8M-1.8 1.8L1.8 -1.8" stroke="#fffdf0" stroke-width=".8"/><circle r="1" fill="#ecca3c"/></g></g>
<g transform="translate(422.0,54.0)" ><path d="M-8 1.4L-3.8 -5.4H6.6L7.6 1.4L-1 4.2Z" fill="#dcdcdc" stroke="#a9a9a9" stroke-width=".9"/><path d="M-5 0.6L-2.6 -3.6H5L5.6 0.8Z" fill="#ececec" stroke="#bcbcbc" stroke-width=".6"/><g transform="translate(4.6,4.4)"><rect x="-3.6" y="-3.6" width="7.2" height="7.2" rx="1" fill="#ecca3c" stroke="#c8a21a" stroke-width=".9"/><path d="M0 -2.5V2.5M-2.5 0H2.5M-1.8 -1.8L1.8 1.8M-1.8 1.8L1.8 -1.8" stroke="#fffdf0" stroke-width=".8"/><circle r="1" fill="#ecca3c"/></g></g>
<g transform="translate(446.0,54.0)" ><path d="M-5.2 -7.4H1.8V6.4L-1.7 3.2L-5.2 0.6Z" fill="#5b8dc9" stroke="#3c6aa6" stroke-width=".9"/><path d="M-3.6 -7V0.6" stroke="#9bbbe2" stroke-width="1.4"/><g transform="translate(3.6,4.6)"><rect x="-3.6" y="-3.6" width="7.2" height="7.2" rx="1" fill="#ecca3c" stroke="#c8a21a" stroke-width=".9"/><path d="M0 -2.5V2.5M-2.5 0H2.5M-1.8 -1.8L1.8 1.8M-1.8 1.8L1.8 -1.8" stroke="#fffdf0" stroke-width=".8"/><circle r="1" fill="#ecca3c"/></g></g>
<g transform="translate(467.5,54.0)" ><path d="M-7.2 -6.8H7.2V7H-7.2Z" fill="#e4e4e4" stroke="#a4a4a4" stroke-width="1"/><path d="M-5 -6.8V7" stroke="#b4b4b4" stroke-width="1"/><path d="M0.6 -7V-1.2L2.6 -3L4.6 -1.2V-7Z" fill="#5b8dc9" stroke="#3c6aa6" stroke-width=".7"/></g>
<g transform="translate(490.0,54.0)" ><circle r="7.4" fill="#fbfbfb" stroke="#6e6e6e" stroke-width="1.3"/><path d="M0 -5V0.3L3.6 2.8" fill="none" stroke="#555" stroke-width="1.2"/><path d="M0 -6.5v1M0 6.5v-1M-6.5 0h1M6.5 0h-1" stroke="#aaa" stroke-width=".8"/><circle cx="5.6" cy="-4" r="1" fill="#6fae5f"/></g>
<g transform="translate(512.5,54.0)" ><path d="M-7.4 -0.6A7.4 7.4 0 0 1 5 -5.4L7 -7.6V-1H0.6L2.8 -3.2A4.4 4.4 0 0 0 -4.2 -0.6Z" fill="#5d92d2" stroke="#3f70b0" stroke-width=".6"/><path d="M7.4 0.6A7.4 7.4 0 0 1 -5 5.4L-7 7.6V1H-0.6L-2.8 3.2A4.4 4.4 0 0 0 4.2 0.6Z" fill="#4579bb" stroke="#335f9c" stroke-width=".6"/><path d="M-5.8 -2.2A6 6 0 0 1 3.4 -5" stroke="#b9d3f0" stroke-width="1.2" fill="none"/></g>
<g transform="translate(533.0,54.0)" ><path d="M-0.9 -6v12M1.1 -6v12" stroke="#e2e2e2" stroke-width="1" stroke-dasharray="1.5 1.5" fill="none"/></g>
<g transform="translate(549.0,54.0)" ><circle cx="-2" cy="-1.6" r="6.2" fill="#5687c2" stroke="#3f6ca6" stroke-width=".6"/><text x="-2" y="2.6" text-anchor="middle" font-family="Liberation Serif, serif" font-size="11.5" font-weight="bold" font-style="italic" fill="#fff">i</text><path d="M2 0.4L2.6 8.6L4.6 6.8L6 9.2L7.4 8.4L6 6L8.6 5.6Z" fill="#fff" stroke="#333" stroke-width=".8" stroke-linejoin="round"/></g>
<g transform="translate(572.0,54.0)" ><path d="M-7 -6.4V6.4M7 -6.4V6.4" stroke="#8a8a8a" stroke-width="1.4"/><path d="M-8 6.8H8" stroke="#777" stroke-width="1.6"/><path d="M-7 -4.4H7M-7 -0.4H7M-7 3.4H7" stroke="#bbb" stroke-width=".7"/><g fill="#fff" stroke-width="1"><circle cx="-3" cy="-4.6" r="1.7" stroke="#cf4436"/><circle cx="3.6" cy="-4.6" r="1.7" stroke="#cf4436"/><circle cx="-4" cy="-0.5" r="1.7" stroke="#57a05a"/><circle cx="-0.4" cy="-0.5" r="1.7" stroke="#57a05a"/><circle cx="-4" cy="3.4" r="1.7" stroke="#3f77b6"/><circle cx="-0.4" cy="3.4" r="1.7" stroke="#3f77b6"/><circle cx="3.2" cy="3.4" r="1.7" stroke="#3f77b6"/></g></g>
<g transform="translate(595.0,54.0)" ><g fill="#5b8fd4"><rect x="-1.7" y="-8.4" width="3.4" height="4.4" rx=".6" transform="rotate(0)"/><rect x="-1.7" y="-8.4" width="3.4" height="4.4" rx=".6" transform="rotate(45)"/><rect x="-1.7" y="-8.4" width="3.4" height="4.4" rx=".6" transform="rotate(90)"/><rect x="-1.7" y="-8.4" width="3.4" height="4.4" rx=".6" transform="rotate(135)"/><rect x="-1.7" y="-8.4" width="3.4" height="4.4" rx=".6" transform="rotate(180)"/><rect x="-1.7" y="-8.4" width="3.4" height="4.4" rx=".6" transform="rotate(225)"/><rect x="-1.7" y="-8.4" width="3.4" height="4.4" rx=".6" transform="rotate(270)"/><rect x="-1.7" y="-8.4" width="3.4" height="4.4" rx=".6" transform="rotate(315)"/></g><circle r="5.2" fill="#5b8fd4"/><circle r="2.3" fill="#fefefe"/></g>
<g transform="translate(617.5,54.0)" ><text x="0" y="6.8" text-anchor="middle" font-family="Liberation Serif, serif" font-size="21" font-weight="bold" fill="#8c1a8c">Σ</text></g>
<g transform="translate(640.0,54.0)" ><rect x="-7.4" y="-7" width="14.8" height="14" rx="1" fill="#e6eef9" stroke="#8fb0dc" stroke-width="1"/><rect x="-7.4" y="-7" width="14.8" height="3.6" fill="#9dbbe4"/><path d="M-5 -1.2H-2.4M-0.6 -1.2H5.4M-5 1.6H-2.4M-0.6 1.6H5.4M-5 4.4H-2.4M-0.6 4.4H5.4" stroke="#7ea4d8" stroke-width="1.3"/></g>
<g transform="translate(657.0,54.6)" ><path d="M-3.6 -2.2 H3.6 L0 2.4Z" fill="#4a4a4a"/></g>
<g transform="translate(674.5,54.0)" ><path d="M-7.4 -4.2H7.4" stroke="#35618f" stroke-width="1.5"/><path d="M-7.4 -6V-2.4M7.4 -6V-2.4" stroke="#35618f" stroke-width="1"/><rect x="-7.8" y="0.6" width="15.6" height="5.4" rx=".8" fill="#9c9c9c" stroke="#6f6f6f" stroke-width=".8"/><path d="M-5.6 1.2v2.6M-3.4 1.2v1.8M-1.2 1.2v2.6M1 1.2v1.8M3.2 1.2v2.6M5.4 1.2v1.8" stroke="#f0f0f0" stroke-width=".8"/></g>
<g transform="translate(691.0,54.6)" ><path d="M-3.6 -2.2 H3.6 L0 2.4Z" fill="#4a4a4a"/></g>
<g transform="translate(708.0,54.0)" ><path d="M-5.6 -7.4H5.6Q8 -7.4 8 -5V-0.6Q8 1.8 5.6 1.8H1L-3.4 5.8L-2.4 1.8H-5.6Q-8 1.8 -8 -0.6V-5Q-8 -7.4 -5.6 -7.4Z" fill="#efd778" stroke="#d9bc4a" stroke-width=".8"/><circle cx="-4.2" cy="5.4" r="2.4" fill="#5e9a5e" stroke="#333" stroke-width=".8"/><path d="M-4.2 4.2V5.6L-3.2 6" stroke="#fff" stroke-width=".8" fill="none"/></g>
<g transform="translate(731.0,54.0)" ><g transform="translate(-1.6,-1.4)"><g fill="#e2e2e2" stroke="#cfcfcf" stroke-width=".6"><rect x="-1.5" y="-7.2" width="3" height="3.6" rx=".6" transform="rotate(0)"/><rect x="-1.5" y="-7.2" width="3" height="3.6" rx=".6" transform="rotate(45)"/><rect x="-1.5" y="-7.2" width="3" height="3.6" rx=".6" transform="rotate(90)"/><rect x="-1.5" y="-7.2" width="3" height="3.6" rx=".6" transform="rotate(135)"/><rect x="-1.5" y="-7.2" width="3" height="3.6" rx=".6" transform="rotate(180)"/><rect x="-1.5" y="-7.2" width="3" height="3.6" rx=".6" transform="rotate(225)"/><rect x="-1.5" y="-7.2" width="3" height="3.6" rx=".6" transform="rotate(270)"/><rect x="-1.5" y="-7.2" width="3" height="3.6" rx=".6" transform="rotate(315)"/></g><circle r="4.8" fill="#e6e6e6" stroke="#cfcfcf" stroke-width=".8"/><path d="M-1.4 -2.2L2.2 0L-1.4 2.2Z" fill="#f8f8f8"/></g><path d="M2.6 1.6L3.2 8.6L5 7L6.2 9.2L7.4 8.6L6.2 6.4L8.4 6Z" fill="#f4f4f4" stroke="#cacaca" stroke-width=".8"/></g>
<g transform="translate(748.0,54.6)" ><path d="M-3.6 -2.2 H3.6 L0 2.4Z" fill="#b4b4b4"/></g>
<g transform="translate(6.0,82.0)" ><path d="M-0.9 -6v12M1.1 -6v12" stroke="#e2e2e2" stroke-width="1" stroke-dasharray="1.5 1.5" fill="none"/></g>
<g transform="translate(23.0,82.0)" ><path d="M-8.4 -2.6L-1.6 -4.6L1 5L-5.8 7Z" fill="#e0712e" stroke="#b95a20" stroke-width=".6"/><path d="M-6.6 -4.6L0.6 -5.6L2 4.6L-5 5.6Z" fill="#efc93c" stroke="#c9a420" stroke-width=".6"/><path d="M-2.6 -7.6L7.6 -6L6 3.6L-4 2Z" fill="#5d8cc6" stroke="#3f6ca6" stroke-width=".8"/><g transform="translate(4.6,5.0)"><rect x="-3.3" y="-3.3" width="6.6" height="6.6" rx="1.2" fill="#639f58" stroke="#8fb887" stroke-width=".8"/><path d="M0 -2.1V2.1M-2.1 0H2.1" stroke="#fff" stroke-width="1.6"/></g></g>
<g transform="translate(45.5,82.0)" ><path d="M-8 -2L0 -5L8 -2V4.6L0 8L-8 4.6Z" fill="#e8c23a" stroke="#b8941a" stroke-width=".8"/><path d="M-8 -2L0 1.4L8 -2M0 1.4V8" fill="none" stroke="#b8941a" stroke-width=".8"/><circle cx="0" cy="-3.6" r="4.6" fill="#6a9bd4" stroke="#3f6ca6" stroke-width=".7"/><path d="M-2.6 -5.6q1.6 -1.6 3 0.2q1.4 1.6 -0.6 2.4q-1.6 .6 -2.4 -2.6" fill="#2f558a"/><g transform="translate(4.8,4.6)"><rect x="-3.6" y="-3.6" width="7.2" height="7.2" rx="1" fill="#ecca3c" stroke="#c8a21a" stroke-width=".9"/><path d="M0 -2.5V2.5M-2.5 0H2.5M-1.8 -1.8L1.8 1.8M-1.8 1.8L1.8 -1.8" stroke="#fffdf0" stroke-width=".8"/><circle r="1" fill="#ecca3c"/></g></g>
<g transform="translate(68.0,82.0)" ><path d="M-7 -6.6L-2.6 4.6L2.6 -6.6H7" fill="none" stroke="#3a3a3a" stroke-width="1.1"/><g fill="#fff" stroke="#3a3a3a" stroke-width="1"><circle cx="-7" cy="-6.6" r="1.5"/><circle cx="-2.6" cy="4.6" r="1.5"/><circle cx="2.6" cy="-6.6" r="1.5"/><circle cx="7" cy="-6.6" r="1.5"/></g><g transform="translate(5.2,5.0)"><rect x="-3.6" y="-3.6" width="7.2" height="7.2" rx="1" fill="#ecca3c" stroke="#c8a21a" stroke-width=".9"/><path d="M0 -2.5V2.5M-2.5 0H2.5M-1.8 -1.8L1.8 1.8M-1.8 1.8L1.8 -1.8" stroke="#fffdf0" stroke-width=".8"/><circle r="1" fill="#ecca3c"/></g></g>
<g transform="translate(90.5,82.0)" ><path d="M-7.6 7.6C-5.4 -1 0 -6.4 8 -8C7.4 -1.4 3 3.6 -4.6 4.2" fill="#8fb2de" stroke="#4f6f96" stroke-width=".9"/><path d="M-7.8 8L-1 -1.4L6 -6.6" fill="none" stroke="#3b587c" stroke-width="1"/><g transform="translate(5.6,4.8)"><rect x="-3.6" y="-3.6" width="7.2" height="7.2" rx="1" fill="#ecca3c" stroke="#c8a21a" stroke-width=".9"/><path d="M0 -2.5V2.5M-2.5 0H2.5M-1.8 -1.8L1.8 1.8M-1.8 1.8L1.8 -1.8" stroke="#fffdf0" stroke-width=".8"/><circle r="1" fill="#ecca3c"/></g></g>
<g transform="translate(114.0,82.0)" ><path d="M-5 -7V-4M-2.4 -7V-4M0.2 -7V-4M2.8 -7V-4M5.4 -7V-4M-5 6.6V3.6M-2.4 6.6V3.6M0.2 6.6V3.6" stroke="#4f6f96" stroke-width="1.1"/><rect x="-7.6" y="-4.2" width="14.2" height="8" rx="1" fill="#6f9bd0" stroke="#456c9e" stroke-width=".9"/><path d="M-6 -1h11" stroke="#9bbde6" stroke-width="1"/><g transform="translate(4.6,5.0)"><rect x="-3.6" y="-3.6" width="7.2" height="7.2" rx="1" fill="#ecca3c" stroke="#c8a21a" stroke-width=".9"/><path d="M0 -2.5V2.5M-2.5 0H2.5M-1.8 -1.8L1.8 1.8M-1.8 1.8L1.8 -1.8" stroke="#fffdf0" stroke-width=".8"/><circle r="1" fill="#ecca3c"/></g></g>
<g transform="translate(136.0,82.0)" ><rect x="-8" y="-7.6" width="15.6" height="15.4" fill="#7ea5d6" stroke="#2f5488" stroke-width="1"/><path d="M-8 1.4H7.6M0 -7.6V7.8M-8 -7.6L0 1.4M0 -7.6L-8 1.4M0 1.4L7.6 -7.6M-4 1.4V7.8M-8 4.6H0" stroke="#2f5488" stroke-width="1" fill="none"/><path d="M0.4 -7L7 -7L0.4 0.6Z" fill="#a9c6ea"/><g transform="translate(5.0,5.0)"><rect x="-3.6" y="-3.6" width="7.2" height="7.2" rx="1" fill="#ecca3c" stroke="#c8a21a" stroke-width=".9"/><path d="M0 -2.5V2.5M-2.5 0H2.5M-1.8 -1.8L1.8 1.8M-1.8 1.8L1.8 -1.8" stroke="#fffdf0" stroke-width=".8"/><circle r="1" fill="#ecca3c"/></g></g>
<g transform="translate(159.0,82.0)" ><rect x="-8" y="-7.6" width="15.8" height="15.4" rx="1.4" fill="#a9c4e4" stroke="#5d82b4" stroke-width="1"/><path d="M-4.6 -7L-2.4 3.6L2.4 -7" fill="none" stroke="#2f4668" stroke-width="1.1"/><circle cx="-2.4" cy="4.4" r="1.4" fill="#fff" stroke="#2f4668" stroke-width=".9"/><g transform="translate(5.2,5.0)"><rect x="-3.6" y="-3.6" width="7.2" height="7.2" rx="1" fill="#ecca3c" stroke="#c8a21a" stroke-width=".9"/><path d="M0 -2.5V2.5M-2.5 0H2.5M-1.8 -1.8L1.8 1.8M-1.8 1.8L1.8 -1.8" stroke="#fffdf0" stroke-width=".8"/><circle r="1" fill="#ecca3c"/></g></g>
<g transform="translate(179.5,82.0)" ><path d="M-0.9 -6v12M1.1 -6v12" stroke="#e2e2e2" stroke-width="1" stroke-dasharray="1.5 1.5" fill="none"/></g>
<g transform="translate(196.5,82.0)" ><path d="M-7 4.6L0.6 -7.6L3 -6L-4.6 6.2L-7.4 7.4Z M-2.6 4.6L5 -7.6L7.4 -6L-0.2 6.2L-3 7.4Z" fill="#dedede" stroke="#cfcfcf" stroke-width=".7"/><path d="M1.6 4.4H8L4.8 8Z" fill="#bdbdbd"/></g>
<g transform="translate(218.0,82.0)" ><path d="M-5.6 3.4L1.6 -7.8L5.6 -5.2L-1.6 6Z" fill="#f0d23c" stroke="#6d6d2e" stroke-width=".8"/><path d="M-3.4 4.8L3.8 -6.4" stroke="#8a7a1e" stroke-width=".9"/><path d="M-5.6 3.4L-6.4 8.6L-1.6 6Z" fill="#e8d9b0" stroke="#5a5a5a" stroke-width=".7"/><path d="M-6.2 7.2L-6.4 8.6L-5 8Z" fill="#222"/><path d="M1.6 -7.8L5.6 -5.2L4.8 -4L0.8 -6.6Z" fill="#9a9a9a"/></g>
<g transform="translate(241.0,82.0)" ><rect x="-8" y="-7.4" width="14.4" height="14.4" rx="1.4" fill="#dedede" stroke="#cecece" stroke-width=".9"/><rect x="-5.6" y="-6" width="9.6" height="5.4" fill="#ececec"/><rect x="-4.4" y="2.4" width="7" height="3.6" fill="#f2f2f2"/><path d="M2 6.2L7.6 -0.6L8.8 0.6L3.4 7.2L1.6 7.8Z" fill="#e8e8e8" stroke="#c6c6c6" stroke-width=".7"/></g>
<g transform="translate(264.0,82.0)" ><path d="M-6.4 6L5.6 -5.4" stroke="#d6d6d6" stroke-width="1"/><rect x="-7.8" y="4.8" width="2.6" height="2.6" fill="#e4e4e4" stroke="#c8c8c8" stroke-width=".7"/><rect x="4.4" y="-6.8" width="2.6" height="2.6" fill="#e4e4e4" stroke="#c8c8c8" stroke-width=".7"/></g>
<g transform="translate(280.5,81.6)" ><path d="M-3.6 -2.2 H3.6 L0 2.4Z" fill="#a8a8a8"/></g>
<g transform="translate(298.0,82.0)" ><path d="M-7.4 -3.6Q-7 -7 -3.4 -6.8Q-0.6 -7.4 1.6 -6.6Q5.4 -7 6.4 -4Q7 -1.4 4.6 -0.2Q2.4 .6 0.4 -0.4Q-2 -1.6 -4.4 -0.6Q-7.4 -0.4 -7.4 -3.6Z" fill="#dadada" stroke="#c6c6c6" stroke-width=".9"/><path d="M-5 -4.2Q-3 -5.4 -1 -4.4T4 -4.2" fill="none" stroke="#efefef" stroke-width="1.2"/><g transform="translate(4.4,4.6)"><rect x="-3.6" y="-3.6" width="7.2" height="7.2" rx="1" fill="#dadada" stroke="#c4c4c4" stroke-width=".8"/><path d="M0 -2.5V2.5M-2.5 0H2.5M-1.8 -1.8L1.8 1.8M-1.8 1.8L1.8 -1.8" stroke="#f8f8f8" stroke-width=".8"/><circle r="1" fill="#dadada"/></g></g>
<g transform="translate(320.0,82.0)" ><path d="M-6.6 6.6L-3.6 -7M-4.6 6.6L-1.6 -7" stroke="#cfcfcf" stroke-width="1"/><rect x="-5.2" y="-8.2" width="3.4" height="2.6" fill="#d8d8d8"/><path d="M-2 -4.4H7.6" stroke="#d4d4d4" stroke-width="1.6"/><path d="M-1 7L6.4 -1M1 -0.6L7.4 6.6" stroke="#cccccc" stroke-width="2.2"/></g>
<g transform="translate(337.5,81.6)" ><path d="M-3.6 -2.2 H3.6 L0 2.4Z" fill="#a8a8a8"/></g>
<g transform="translate(355.0,82.0)" ><rect x="-7.8" y="-6.6" width="14.4" height="13.6" fill="#e0e0e0" stroke="#d0d0d0" stroke-width=".8"/><path d="M-7.8 -3.4H6.6M-7.8 0H6.6M-7.8 3.4H6.6" stroke="#f0f0e4" stroke-width="1.2"/><path d="M-2.6 6.4L4.6 -6.8L7 -5.4L-0.2 7.6L-3 8.4Z" fill="#d4d4d4" stroke="#c4c4c4" stroke-width=".7"/></g>
<g transform="translate(376.0,82.0)" ><path d="M-6.6 -4.6H6.6M-2.4 -4.6V-6.8H2.4V-4.6" stroke="#cfcfcf" stroke-width="1.4" fill="none"/><path d="M-5.4 -3H5.4L4.4 7.6H-4.4Z" fill="#dedede" stroke="#cdcdcd" stroke-width=".9"/><path d="M-2.4 -1V5.8M0 -1V5.8M2.4 -1V5.8" stroke="#f4f4f4" stroke-width="1.1"/></g>
<g transform="translate(400.0,82.0)" ><path d="M-7.6 -4.6L3.4 2.6M-7.6 1.4L3.4 -4.4" stroke="#d2d2d2" stroke-width="1.3"/><circle cx="5" cy="-4.6" r="2.4" fill="none" stroke="#cfcfcf" stroke-width="1.2"/><circle cx="5" cy="3.4" r="2.4" fill="none" stroke="#cfcfcf" stroke-width="1.2"/></g>
<g transform="translate(422.5,82.0)" ><path d="M-3 -7.4H3.6L6.6 -4.4V4.6H-3Z" fill="#ececec" stroke="#d2d2d2" stroke-width=".8"/><path d="M-6.4 -4.6H0.2L3.2 -1.6V7.6H-6.4Z" fill="#e2e2e2" stroke="#d0d0d0" stroke-width=".8"/><path d="M-4.6 1H1.4M-4.6 3.6H1.4" stroke="#f2f2f2" stroke-width="1"/></g>
<g transform="translate(445.0,82.0)" ><rect x="-6.2" y="-7" width="12.2" height="14.6" rx="1" fill="#dcdcdc" stroke="#cecece" stroke-width=".8"/><rect x="-3" y="-8" width="6" height="2.6" fill="#d0d0d0"/><path d="M-3.6 -3.4H3.8V6H-3.6Z" fill="#ebebeb"/><path d="M-2 0H2M-2 2.6H2" stroke="#d6d6d6" stroke-width="1"/></g>
<g transform="translate(468.0,82.0)" ><path d="M-7.4 -1.4L-1.4 -6.8V-3.4C4 -3.6 6.6 0 5.6 4.4C4.8 6.6 2.6 7.4 -0.6 7.2V4C2 4.2 2.8 2.6 2.4 1.4C2 0.2 0.6 0.4 -1.4 0.4V4Z" fill="#d8d8d8" stroke="#cdcdcd" stroke-width=".6"/></g>
<g transform="translate(490.5,82.0)" ><path d="M7.4 -1.4L1.4 -6.8V-3.4C-4 -3.6 -6.6 0 -5.6 4.4C-4.8 6.6 -2.6 7.4 0.6 7.2V4C-2 4.2 -2.8 2.6 -2.4 1.4C-2 0.2 -0.6 0.4 1.4 0.4V4Z" fill="#d8d8d8" stroke="#cdcdcd" stroke-width=".6"/></g>
<g transform="translate(511.0,82.0)" ><path d="M0 -6v12" stroke="#e0e0e0" stroke-width="2.4"/><path d="M0 -6v12" stroke="#fafafa" stroke-width="1"/></g>
<g transform="translate(527.0,82.0)" ><path d="M-8.4 -2L-5.6 -5.4H7.4V2.2H-5.6Z" fill="#f0d04a" stroke="#c9a31c" stroke-width=".8"/><text x="1" y="1" text-anchor="middle" font-family="Liberation Sans, sans-serif" font-size="7" font-weight="bold" fill="#3a3214">abc</text></g>
<g transform="translate(550.0,82.0)" ><circle cx="-2" cy="-2.4" r="5.2" fill="#d9302a" stroke="#2a2a2a" stroke-width=".7"/><path d="M-2 -2.4V-7.6A5.2 5.2 0 0 0 -6.6 0Z" fill="#3aa43a"/><path d="M-2 -2.4L-6.6 0A5.2 5.2 0 0 0 1.6 1.4Z" fill="#f0d23c"/><path d="M-2 -2.4L-7 -1M-2 -2.4V-7.6M-2 -2.4L1.6 1.4" stroke="#2a2a2a" stroke-width=".6"/><rect x="-0.6" y="2" width="2.8" height="6" fill="#f0d23c"/><rect x="2.2" y="-0.6" width="2.8" height="8.6" fill="#3aa43a"/><rect x="5" y="4.4" width="2.8" height="3.6" fill="#c0221e"/></g>
<g transform="translate(564.5,82.0)" ><path d="M0 -7.5v15" stroke="#dedede" stroke-width="1.2"/></g>
<g transform="translate(579.0,82.0)" ><path d="M-8.6 -3.4L-5.8 -6.8H6.6V0.4H-5.8Z" fill="#c6dbf4" stroke="#7ea4d8" stroke-width=".8"/><text x="-0.6" y="-0.8" text-anchor="middle" font-family="Liberation Sans, sans-serif" font-size="7.4" font-weight="bold" fill="#1f2f4a">ab</text><path d="M4.4 -4.6V2" stroke="#8a8a8a" stroke-width="1.2"/><circle cx="5.4" cy="4.6" r="2.9" fill="#c01818" stroke="#8a1010" stroke-width=".6"/></g>
<g transform="translate(601.0,82.0)" ><path d="M-8.4 -3L-5.4 -6.4H7V1.4H-5.4Z" fill="#e23a3a" stroke="#b81e1e" stroke-width=".9"/><rect x="-4.6" y="-5" width="10.4" height="5" fill="#f6d6d6"/><text x="0.8" y="-0.6" text-anchor="middle" font-family="Liberation Sans, sans-serif" font-size="6.6" font-weight="bold" fill="#d02a2a">abc</text><path d="M-4.6 -4.4L5.8 -0.6" stroke="#d02a2a" stroke-width=".7"/></g>
<g transform="translate(615.5,82.0)" ><path d="M0 -7.5v15" stroke="#dedede" stroke-width="1.2"/></g>
<g transform="translate(630.0,82.0)" ><path d="M-8.6 -3.4L-5.8 -6.6H5.4V-0.2H-5.8Z" fill="#e0e0e0" stroke="#cdcdcd" stroke-width=".8"/><text x="0" y="-1.4" text-anchor="middle" font-family="Liberation Sans, sans-serif" font-size="6.6" font-weight="bold" fill="#c2c2c2">ab</text><path d="M4.2 -3.8V2" stroke="#d2d2d2" stroke-width="1.2"/><circle cx="5" cy="4.6" r="2.9" fill="#d0d0d0"/></g>
<g transform="translate(653.0,82.0)" ><path d="M-8.6 -3.4L-5.8 -6.6H5.4V-0.2H-5.8Z" fill="#e0e0e0" stroke="#cdcdcd" stroke-width=".8"/><text x="0" y="-1.4" text-anchor="middle" font-family="Liberation Sans, sans-serif" font-size="6.6" font-weight="bold" fill="#c2c2c2">abc</text><path d="M-4 5.4Q1 0.6 6.6 5.4Q1 9.4 -4 5.4Z" fill="#f2f2f2" stroke="#d0d0d0" stroke-width=".9"/><circle cx="1.2" cy="5.2" r="1.6" fill="#cfcfcf"/></g>
<g transform="translate(675.5,82.0)" ><path d="M-8.6 -3.4L-5.8 -6.6H5.4V-0.2H-5.8Z" fill="#e0e0e0" stroke="#cdcdcd" stroke-width=".8"/><text x="0" y="-1.4" text-anchor="middle" font-family="Liberation Sans, sans-serif" font-size="6.6" font-weight="bold" fill="#c2c2c2">abc</text><g transform="translate(4.6,5.0)"><rect x="-3.6" y="-3.6" width="7.2" height="7.2" rx="1" fill="#d6d6d6" stroke="#c2c2c2" stroke-width=".8"/><path d="M-2 0H1.5M0 -1.8L2 0L0 1.8" stroke="#fafafa" stroke-width="1.4" fill="none"/></g></g>
<g transform="translate(698.0,82.0)" ><path d="M-8.6 -3.4L-5.8 -6.6H5.4V-0.2H-5.8Z" fill="#e0e0e0" stroke="#cdcdcd" stroke-width=".8"/><text x="0" y="-1.4" text-anchor="middle" font-family="Liberation Sans, sans-serif" font-size="6.6" font-weight="bold" fill="#c2c2c2">abc</text><g transform="translate(4.6,5.0)"><rect x="-3.6" y="-3.6" width="7.2" height="7.2" rx="1" fill="#d6d6d6" stroke="#c2c2c2" stroke-width=".8"/><path d="M0 2V-1.5M-1.8 0L0 -2L1.8 0" stroke="#fafafa" stroke-width="1.4" fill="none"/></g></g>
<g transform="translate(721.0,82.0)" ><path d="M-8.6 -3.4L-5.8 -6.6H5.4V-0.2H-5.8Z" fill="#e0e0e0" stroke="#cdcdcd" stroke-width=".8"/><text x="0" y="-1.4" text-anchor="middle" font-family="Liberation Sans, sans-serif" font-size="6.6" font-weight="bold" fill="#c2c2c2">abc</text><rect x="1" y="1.4" width="7.2" height="7.2" rx="1" fill="#dcdcdc" stroke="#cacaca" stroke-width=".8"/><path d="M2.6 7L6.4 3" stroke="#f8f8f8" stroke-width="1.8"/></g>
<g transform="translate(741.0,82.0)" ><path d="M-0.9 -6v12M1.1 -6v12" stroke="#e2e2e2" stroke-width="1" stroke-dasharray="1.5 1.5" fill="none"/></g>
<g transform="translate(758.0,82.0)" ><circle r="7.6" cx="0" cy="-1" fill="#6f9fd8" stroke="#3f6aa6" stroke-width=".8"/><ellipse cx="0" cy="-1" rx="3.6" ry="7.6" fill="#a9c8ee" stroke="#3f6aa6" stroke-width=".7"/><path d="M-7.4 -3.2H7.4M-7.4 1.4H7.4M0 -8.6V6.6" stroke="#3f5f8e" stroke-width=".8" fill="none"/><path d="M-5.6 -4.6h2v2.2h-2zM-5.6 0h2v2.2h-2zM3.8 -4.6h2v2.2h-2zM3.8 0h2v2.2h-2z" fill="#4a4a4a"/><rect x="1.6" y="2" width="6.6" height="6.6" rx=".8" fill="#3f7a3f" stroke="#2a5a2a" stroke-width=".6"/><path d="M3 3.6L6.8 7.2M6.8 3.6L3 7.2" stroke="#8a8a8a" stroke-width="1.2"/></g>
<g transform="translate(780.5,82.0)" ><circle r="7.6" cx="0" cy="-1" fill="#6f9fd8" stroke="#3f6aa6" stroke-width=".8"/><ellipse cx="0" cy="-1" rx="3.6" ry="7.6" fill="#a9c8ee" stroke="#3f6aa6" stroke-width=".7"/><path d="M-7.4 -3.2H7.4M-7.4 1.4H7.4M0 -8.6V6.6" stroke="#3f5f8e" stroke-width=".8" fill="none"/><path d="M-5.6 -4.6h2v2.2h-2zM-5.6 0h2v2.2h-2zM3.8 -4.6h2v2.2h-2zM3.8 0h2v2.2h-2z" fill="#4a4a4a"/><rect x="1.6" y="2" width="6.6" height="6.6" rx=".8" fill="#3f8a4a" stroke="#2a5a2a" stroke-width=".6"/><circle cx="4.6" cy="5" r="1.7" fill="#e6f2e6" stroke="#fff" stroke-width=".7"/><path d="M5.8 6.2L7.4 7.8" stroke="#fff" stroke-width="1"/></g>
<g transform="translate(803.0,82.0)" ><circle r="7.6" cx="0" cy="-1.4" fill="#7fa7d8" stroke="#3f5f8e" stroke-width=".8"/><path d="M-4.6 -6q2.6 -1.6 4 .6q-.6 2.4 -3.4 2.2q-2.4 1.6 -2.6 -1zM2 -3.6q2.6 -.8 4 1.2q-1 2.6 -3.4 1.6z" fill="#c9dbf0"/><path d="M-7.4 -2H7.4M0 -9V3" stroke="#4f6f9e" stroke-width=".6"/><circle cx="-3.6" cy="5.4" r="3" fill="#111"/><circle cx="3.6" cy="5.4" r="3" fill="#111"/><path d="M-5 1.6H-1.6L-1 4H1L1.6 1.6H5L5.6 4.6H-5.6Z" fill="#111"/><circle cx="-3.6" cy="5.6" r="1.3" fill="#f4f4f4"/><circle cx="3.6" cy="5.6" r="1.3" fill="#f4f4f4"/></g>
<g transform="translate(824.0,82.0)" ><path d="M-0.9 -6v12M1.1 -6v12" stroke="#e2e2e2" stroke-width="1" stroke-dasharray="1.5 1.5" fill="none"/></g>
<g transform="translate(840.0,82.0)" ><path d="M-1 -7.6H2.6Q4.4 -7.6 4.4 -5.8V-2.4Q4.4 -0.8 2.8 -0.8H-2Q-3.8 -0.8 -3.8 1V2.6H-5.8Q-7.6 2.6 -7.6 0.8V-2.6Q-7.6 -4.4 -5.8 -4.4H0.4V-5.2H-3V-5.8Q-3 -7.6 -1 -7.6Z" fill="#3f7cc0"/><circle cx="-1.2" cy="-6" r=".8" fill="#fff"/><path d="M0.6 7.2H-2.8Q-4.6 7.2 -4.6 5.4V2.2Q-4.6 0.4 -3 0.4H1.8Q3.6 0.4 3.6 -1.4V-3H5.6Q7.4 -3 7.4 -1.2V2.2Q7.4 4 5.6 4H-0.6V4.8H2.8V5.4Q2.8 7.2 0.6 7.2Z" fill="#f0cc4a"/><circle cx="1" cy="5.8" r=".8" fill="#fff"/><path d="M3.6 5.2L7.4 7L3.6 8.8" fill="none" stroke="#444" stroke-width="1"/></g>
<g transform="translate(863.0,82.0)" ><path d="M-7.2 -6.4L4 -8L6.4 6.2L-5 8Z" fill="#2a2f3a" stroke="#1a1e26" stroke-width=".6"/><path d="M4 -8L7 -6L7.4 5L6.4 6.2Z" fill="#2f7fd6"/><path d="M-4.4 -2.4L3 4.4M-4.2 3.4L3.4 -4.6V4.6" stroke="#3f8fe0" stroke-width="1.2" fill="none"/></g>
<g transform="translate(879.5,81.6)" ><path d="M-3.6 -2.2 H3.6 L0 2.4Z" fill="#4a4a4a"/></g>
<g transform="translate(897.0,82.0)" ><path d="M-7.4 6.4V2.6L-3.4 -2.6L3.6 2L7.4 4.6V6.4Z" fill="#1fe01f" stroke="#111" stroke-width="1.3" stroke-linejoin="round"/><path d="M5 -8.6L5.8 -6.2L8.2 -6.6L6.6 -4.6L8 -2.8L5.6 -3.2L4.6 -1L4 -3.4L1.6 -3.8L3.6 -5.2L3 -7.6Z" fill="#f2d648" stroke="#e0bc2a" stroke-width=".4"/></g>
<g transform="translate(917.5,82.0)" ><path d="M-0.9 -6v12M1.1 -6v12" stroke="#e2e2e2" stroke-width="1" stroke-dasharray="1.5 1.5" fill="none"/></g>
<g transform="translate(934.0,82.0)" ><rect x="-7.6" y="-7.6" width="15" height="15.4" rx="1" fill="#5c87b8" stroke="#33506f" stroke-width=".8"/><rect x="-7.6" y="-7.6" width="4" height="15.4" fill="#2a3a50"/><text x="2" y="4.4" text-anchor="middle" font-family="Liberation Sans, sans-serif" font-size="11" font-weight="bold" fill="#e6eef8">?</text></g>
<g transform="translate(954.5,82.0)" ><path d="M-0.9 -6v12M1.1 -6v12" stroke="#e2e2e2" stroke-width="1" stroke-dasharray="1.5 1.5" fill="none"/></g>
<g transform="translate(6.0,110.0)" ><path d="M-0.9 -6v12M1.1 -6v12" stroke="#e2e2e2" stroke-width="1" stroke-dasharray="1.5 1.5" fill="none"/></g>
<g transform="translate(22.0,110.0)" ><path d="M-8 -7.6L8.4 8H-8Z" fill="#e4e4e4" stroke="#cdcdcd" stroke-width="1"/><path d="M-4.6 0.6L2 6.6H-4.6Z" fill="#f6f6f6" stroke="#cdcdcd" stroke-width=".8"/><path d="M3.6 -7.4V4M6.6 -7.4V6.6" stroke="#d4d4d4" stroke-width="1.1"/></g>
<g transform="translate(45.5,110.0)" ><path d="M-7.4 -3.6Q-7 -7 -3.4 -6.8Q-0.6 -7.4 1.6 -6.6Q5.4 -7 6.4 -4Q7 -1.4 4.6 -0.2Q2.4 .6 0.4 -0.4Q-2 -1.6 -4.4 -0.6Q-7.4 -0.4 -7.4 -3.6Z" fill="#dadada" stroke="#c6c6c6" stroke-width=".9"/><path d="M-5 -4.2Q-3 -5.4 -1 -4.4T4 -4.2" fill="none" stroke="#efefef" stroke-width="1.2"/><g transform="translate(4.4,4.8)"><rect x="-3.6" y="-3.6" width="7.2" height="7.2" rx="1" fill="#d6d6d6" stroke="#c2c2c2" stroke-width=".8"/><path d="M-2 0H1.5M0 -1.8L2 0L0 1.8" stroke="#fafafa" stroke-width="1.4" fill="none"/></g></g>
<g transform="translate(62.4,110.4)" ><path d="M-3.6 -2.2 H3.6 L0 2.4Z" fill="#a8a8a8"/></g>
<g transform="translate(79.5,110.0)" ><path d="M-7.4 -3.6Q-7 -7 -3.4 -6.8Q-0.6 -7.4 1.6 -6.6Q5.4 -7 6.4 -4Q7 -1.4 4.6 -0.2Q2.4 .6 0.4 -0.4Q-2 -1.6 -4.4 -0.6Q-7.4 -0.4 -7.4 -3.6Z" fill="#dadada" stroke="#c6c6c6" stroke-width=".9"/><path d="M-5 -4.2Q-3 -5.4 -1 -4.4T4 -4.2" fill="none" stroke="#efefef" stroke-width="1.2"/><g transform="translate(4.4,4.8)"><rect x="-3.6" y="-3.6" width="7.2" height="7.2" rx="1" fill="#d6d6d6" stroke="#c2c2c2" stroke-width=".8"/><path d="M0 2V-1.5M-1.8 0L0 -2L1.8 0" stroke="#fafafa" stroke-width="1.4" fill="none"/></g></g>
<g transform="translate(102.5,110.0)" ><path d="M-7.4 -3.6Q-7 -7 -3.4 -6.8Q-0.6 -7.4 1.6 -6.6Q5.4 -7 6.4 -4Q7 -1.4 4.6 -0.2Q2.4 .6 0.4 -0.4Q-2 -1.6 -4.4 -0.6Q-7.4 -0.4 -7.4 -3.6Z" fill="#dadada" stroke="#c6c6c6" stroke-width=".9"/><path d="M-5 -4.2Q-3 -5.4 -1 -4.4T4 -4.2" fill="none" stroke="#efefef" stroke-width="1.2"/><g transform="translate(4.4,4.8)"><rect x="-3.6" y="-3.6" width="7.2" height="7.2" rx="1" fill="#d6d6d6" stroke="#c2c2c2" stroke-width=".8"/><path d="M-2.2 0H2.2M-1 -1.5L-2.4 0L-1 1.5M1 -1.5L2.4 0L1 1.5" stroke="#fafafa" stroke-width="1.4" fill="none"/></g></g>
<g transform="translate(125.0,110.0)" ><circle cx="-2.6" cy="-2.4" r="5.4" fill="#dcdcdc" stroke="#cacaca" stroke-width=".8"/><path d="M0.4 -2.4L5 -1L8 3L5.4 8H0.4L-2 4Z" fill="#d6d6d6" stroke="#c4c4c4" stroke-width=".8"/><path d="M-3 -3L3.6 4" stroke="#c0c0c0" stroke-width="1"/></g>
<g transform="translate(148.0,110.0)" ><path d="M-7.4 -3.6Q-7 -7 -3.4 -6.8Q-0.6 -7.4 1.6 -6.6Q5.4 -7 6.4 -4Q7 -1.4 4.6 -0.2Q2.4 .6 0.4 -0.4Q-2 -1.6 -4.4 -0.6Q-7.4 -0.4 -7.4 -3.6Z" fill="#dadada" stroke="#c6c6c6" stroke-width=".9"/><path d="M-5 -4.2Q-3 -5.4 -1 -4.4T4 -4.2" fill="none" stroke="#efefef" stroke-width="1.2"/><g transform="translate(4.4,4.8)"><rect x="-3.6" y="-3.6" width="7.2" height="7.2" rx="1" fill="#dadada" stroke="#c4c4c4" stroke-width=".8"/><path d="M0 -2.5V2.5M-2.5 0H2.5M-1.8 -1.8L1.8 1.8M-1.8 1.8L1.8 -1.8" stroke="#f8f8f8" stroke-width=".8"/><circle r="1" fill="#dadada"/></g></g>
<g transform="translate(170.5,110.0)" ><path d="M-7.4 -3.6Q-7 -7 -3.4 -6.8Q-0.6 -7.4 1.6 -6.6Q5.4 -7 6.4 -4Q7 -1.4 4.6 -0.2Q2.4 .6 0.4 -0.4Q-2 -1.6 -4.4 -0.6Q-7.4 -0.4 -7.4 -3.6Z" fill="#dadada" stroke="#c6c6c6" stroke-width=".9"/><path d="M-5 -4.2Q-3 -5.4 -1 -4.4T4 -4.2" fill="none" stroke="#efefef" stroke-width="1.2"/><ellipse cx="-4.6" cy="5" rx="3.4" ry="2.4" fill="#d4d4d4" transform="rotate(-30 -4.6 5)"/><g transform="translate(4.4,4.8)"><rect x="-3.6" y="-3.6" width="7.2" height="7.2" rx="1" fill="#dadada" stroke="#c4c4c4" stroke-width=".8"/><path d="M0 -2.5V2.5M-2.5 0H2.5M-1.8 -1.8L1.8 1.8M-1.8 1.8L1.8 -1.8" stroke="#f8f8f8" stroke-width=".8"/><circle r="1" fill="#dadada"/></g></g>
<g transform="translate(193.0,110.0)" ><path d="M-7.4 -3.6Q-7 -7 -3.4 -6.8Q-0.6 -7.4 1.6 -6.6Q5.4 -7 6.4 -4Q7 -1.4 4.6 -0.2Q2.4 .6 0.4 -0.4Q-2 -1.6 -4.4 -0.6Q-7.4 -0.4 -7.4 -3.6Z" fill="#dadada" stroke="#c6c6c6" stroke-width=".9"/><path d="M-5 -4.2Q-3 -5.4 -1 -4.4T4 -4.2" fill="none" stroke="#efefef" stroke-width="1.2"/><g transform="translate(4.4,4.8)"><rect x="-3.6" y="-3.6" width="7.2" height="7.2" rx="1" fill="#dadada" stroke="#c4c4c4" stroke-width=".8"/><path d="M0 -2.5V2.5M-2.5 0H2.5M-1.8 -1.8L1.8 1.8M-1.8 1.8L1.8 -1.8" stroke="#f8f8f8" stroke-width=".8"/><circle r="1" fill="#dadada"/></g></g>
<g transform="translate(216.0,110.0)" ><path d="M-7.4 -3.6Q-7 -7 -3.4 -6.8Q-0.6 -7.4 1.6 -6.6Q5.4 -7 6.4 -4Q7 -1.4 4.6 -0.2Q2.4 .6 0.4 -0.4Q-2 -1.6 -4.4 -0.6Q-7.4 -0.4 -7.4 -3.6Z" fill="#dadada" stroke="#c6c6c6" stroke-width=".9"/><path d="M-5 -4.2Q-3 -5.4 -1 -4.4T4 -4.2" fill="none" stroke="#efefef" stroke-width="1.2"/><g transform="translate(4.4,4.8)"><rect x="-3.6" y="-3.6" width="7.2" height="7.2" rx="1" fill="#d6d6d6" stroke="#c2c2c2" stroke-width=".8"/><path d="M-2.2 0H2.2M-1 -1.5L-2.4 0L-1 1.5M1 -1.5L2.4 0L1 1.5" stroke="#fafafa" stroke-width="1.4" fill="none"/></g></g>
<g transform="translate(238.5,110.0)" ><path d="M-7.4 -3.6Q-7 -7 -3.4 -6.8Q-0.6 -7.4 1.6 -6.6Q5.4 -7 6.4 -4Q7 -1.4 4.6 -0.2Q2.4 .6 0.4 -0.4Q-2 -1.6 -4.4 -0.6Q-7.4 -0.4 -7.4 -3.6Z" fill="#dadada" stroke="#c6c6c6" stroke-width=".9"/><path d="M-5 -4.2Q-3 -5.4 -1 -4.4T4 -4.2" fill="none" stroke="#efefef" stroke-width="1.2"/><ellipse cx="-4.6" cy="5" rx="3.4" ry="2.4" fill="#d4d4d4" transform="rotate(-30 -4.6 5)"/><g transform="translate(4.4,4.8)"><rect x="-3.6" y="-3.6" width="7.2" height="7.2" rx="1" fill="#d6d6d6" stroke="#c2c2c2" stroke-width=".8"/><path d="M-2.2 0H2.2M-1 -1.5L-2.4 0L-1 1.5M1 -1.5L2.4 0L1 1.5" stroke="#fafafa" stroke-width="1.4" fill="none"/></g></g>
<g transform="translate(261.0,110.0)" ><path d="M-7.6 -3.4Q-7.4 -7.2 -3.4 -7Q1 -7.6 5 -6.8Q8 -6 7.6 -3Q7 -0.4 3.6 -0.6Q0 -1 -1.6 2Q-2.4 7 -5 7.2Q-7.6 7 -7.4 2Z" fill="#d8d8d8" stroke="#c8c8c8" stroke-width=".8"/></g>
<g transform="translate(283.5,110.0)" ><path d="M-7.6 5Q-9 0.4 -4 -2.4Q-1 -3.6 1.6 -6.6Q5.4 -8.6 7.6 -5.6Q9 -2 5 0.6Q2 2 -0.6 5.6Q-4.6 9 -7.6 5Z" fill="#d6d6d6" stroke="#c8c8c8" stroke-width=".8"/></g>
<g transform="translate(306.5,110.0)" ><path d="M-7 -7L-2.6 3L1.6 -5H7" fill="none" stroke="#d0d0d0" stroke-width="1"/><rect x="-8.2" y="-8" width="2.4" height="2.4" fill="#ddd" stroke="#c8c8c8" stroke-width=".6"/><rect x="-3.8" y="2" width="2.4" height="2.4" fill="#ddd" stroke="#c8c8c8" stroke-width=".6"/><rect x="1" y="1.2" width="7.2" height="7.2" rx="1" fill="#d8d8d8" stroke="#c6c6c6" stroke-width=".8"/><path d="M2.4 4.8L4.6 2.6L6.8 4.8L4.6 7Z" fill="none" stroke="#f8f8f8" stroke-width="1"/></g>
<g transform="translate(328.5,110.0)" ><path d="M-1.6 -8V8M2.6 -2V8M-8 -0.4H8" stroke="#d0d0d0" stroke-width="1"/><rect x="3.4" y="-7.6" width="4.4" height="4.4" fill="#f2f2f2" stroke="#c8c8c8" stroke-width=".8"/><rect x="-7.6" y="3" width="4.4" height="4.4" fill="#f2f2f2" stroke="#c8c8c8" stroke-width=".8"/><circle cx="-1.6" cy="-0.4" r="1.5" fill="#e0e0e0" stroke="#c4c4c4" stroke-width=".7"/><circle cx="2.6" cy="-0.4" r="1.5" fill="#e0e0e0" stroke="#c4c4c4" stroke-width=".7"/></g>
<g transform="translate(351.5,110.0)" ><path d="M-8 -4Q-7.4 -8 -3.6 -7.4Q-1 -7 -1 -3.4Q-1.4 0.4 -4.6 0.4Q-8 0 -8 -4ZM1 -4Q1.6 -8 5 -7.4Q8 -6.6 7.6 -3.4Q7 0.4 3.6 0.2Q1 -0.4 1 -4Z" fill="#dadada" stroke="#c8c8c8" stroke-width=".8"/><path d="M-3.4 7.6L2.6 -1.6M3.4 7.6L-2.6 -1.6" stroke="#cacaca" stroke-width="1.3"/><circle cx="-3.4" cy="6.2" r="1.7" fill="#fafafa" stroke="#c8c8c8" stroke-width="1"/><circle cx="3.4" cy="6.2" r="1.7" fill="#fafafa" stroke="#c8c8c8" stroke-width="1"/></g>
<g transform="translate(374.0,110.0)" ><path d="M-8 -4Q-7.4 -8 -3.6 -7.4Q-1 -7 -1 -3.4Q-1.4 0.4 -4.6 0.4Q-8 0 -8 -4ZM1 -4Q1.6 -8 5 -7.4Q8 -6.6 7.6 -3.4Q7 0.4 3.6 0.2Q1 -0.4 1 -4Z" fill="#dadada" stroke="#c8c8c8" stroke-width=".8"/><path d="M-6 -4.4H-3M3 -4.4H6" stroke="#c0c0c0" stroke-width="1.2"/><path d="M-3.4 7.6L2.6 -1.6M3.4 7.6L-2.6 -1.6" stroke="#cacaca" stroke-width="1.3"/><circle cx="-3.4" cy="6.2" r="1.7" fill="#fafafa" stroke="#c8c8c8" stroke-width="1"/><circle cx="3.4" cy="6.2" r="1.7" fill="#fafafa" stroke="#c8c8c8" stroke-width="1"/></g>
<g transform="translate(396.5,110.0)" ><path d="M-8 -3.6Q-7.4 -8 -3.4 -7.4Q-0.6 -7 -0.6 -3Q-1 0.6 -4.4 0.6Q-8 0 -8 -3.6ZM1.2 -4Q1.6 -7.6 5 -7Q8 -6.4 7.6 -3.4Q7 0 3.6 -0.2Q1.2 -0.6 1.2 -4Z" fill="#d8d8d8" stroke="#c6c6c6" stroke-width=".8"/><path d="M-4.6 0.6Q-4.6 4.6 0.6 7" fill="none" stroke="#c8c8c8" stroke-width="1.2"/><path d="M-5 -5V-1.6M-3.4 -4H-6M3.6 -5V-1.6M5 -4H2.6" stroke="#efefef" stroke-width=".9"/></g>
<g transform="translate(419.0,110.0)" ><path d="M-7.6 -7H7.6M-7.6 -2.6H7.6M-7.6 2.6H7.6M-7.6 7H7.6" stroke="#d8d8d8" stroke-width="1"/><path d="M0 -7V7" stroke="#cfcfcf" stroke-width="1"/><path d="M-3 -5L0 -3L3 -5M-3 5L0 3L3 5" fill="none" stroke="#c8c8c8" stroke-width="1"/></g>
<g transform="translate(442.0,110.0)" ><path d="M-1.6 6.6A6.6 6.6 0 0 1 -3 -5.6" fill="none" stroke="#c6c6c6" stroke-width="1.2"/><path d="M-4.6 -7L-1.4 -5.8L-3.6 -3.4Z" fill="#c6c6c6"/><path d="M0.6 -7.4L6.6 -3.6L0.6 0Z" fill="#d8d8d8" stroke="#cacaca" stroke-width=".7"/><path d="M1 2L4.4 7.6H-2.4Z" fill="#fafafa" stroke="#d0d0d0" stroke-width=".9"/></g>
<g transform="translate(459.0,110.6)" ><path d="M-3.6 -2.2 H3.6 L0 2.4Z" fill="#a8a8a8"/></g>
<g transform="translate(6.0,139.0)" ><path d="M-0.9 -6v12M1.1 -6v12" stroke="#e2e2e2" stroke-width="1" stroke-dasharray="1.5 1.5" fill="none"/></g>
<g transform="translate(22.5,139.0)" ><rect x="-8" y="-8" width="16" height="14.6" fill="#e6e6e6" stroke="#555" stroke-width="1" stroke-dasharray="1.4 1.4"/><rect x="-7" y="-6.6" width="10.4" height="10" fill="#f6d63c" stroke="#d8b41e" stroke-width=".7"/><g transform="translate(-1.4,-2.2)"><path d="M0 0L0.6 9.6L3 7.4L4.6 10.6L6.2 9.8L4.6 6.6L7.8 6.2Z" fill="#fff" stroke="#333" stroke-width=".9" stroke-linejoin="round"/></g></g>
<g transform="translate(39.6,139.4)" ><path d="M-3.6 -2.2 H3.6 L0 2.4Z" fill="#4a4a4a"/></g>
<g transform="translate(57.5,139.0)" ><rect x="-3.8" y="-2.6" width="11.4" height="9.6" fill="#f2d23c" stroke="#d2ae1c" stroke-width=".8"/><rect x="-7.6" y="-6.6" width="11" height="9" rx="1" fill="#a8a8a8" stroke="#8a8a8a" stroke-width=".8"/><path d="M-6 -3.8H1.8M-6 -0.6H1.8" stroke="#f4f4f4" stroke-width="1.5"/></g>
<g transform="translate(73.8,139.4)" ><path d="M-3.6 -2.2 H3.6 L0 2.4Z" fill="#4a4a4a"/></g>
<g transform="translate(92.0,139.0)" ><rect x="-8.4" y="-7.4" width="10" height="9.4" fill="#f2d23c" stroke="#d2ae1c" stroke-width=".8"/><rect x="-5" y="-4.4" width="10" height="9.4" fill="#f2d23c" stroke="#d2ae1c" stroke-width=".8"/><rect x="0" y="1" width="7.6" height="7.4" rx="1" fill="#c81e1e" stroke="#8e1212" stroke-width=".6"/><circle cx="3.8" cy="4.7" r="2.3" fill="none" stroke="#fff" stroke-width="1.1"/><path d="M2.2 6.3L5.4 3.1" stroke="#fff" stroke-width="1"/></g>
<g transform="translate(108.0,139.4)" ><path d="M-3.6 -2.2 H3.6 L0 2.4Z" fill="#4a4a4a"/></g>
<g transform="translate(125.5,139.0)" ><rect x="-7.6" y="-7.4" width="10.4" height="10" fill="#f6d63c" stroke="#d8b41e" stroke-width=".8"/><path d="M5.4 7.6Q2.6 3.6 2.6 2A2.8 2.8 0 0 1 8.2 2Q8.2 3.6 5.4 7.6Z" fill="#4f7fb4" stroke="#3a6496" stroke-width=".5"/><circle cx="5.4" cy="2" r="1" fill="#fff"/></g>
<g transform="translate(146.0,139.0)" ><path d="M-0.9 -6v12M1.1 -6v12" stroke="#e2e2e2" stroke-width="1" stroke-dasharray="1.5 1.5" fill="none"/></g>
<g transform="translate(162.0,139.0)" ><path d="M-7.6 -7H7.4V2H-1V7.4H-7.6Z" fill="#f0f0f0" stroke="#d0d0d0" stroke-width=".9"/><path d="M-7.6 -7L-1 0.6L-7.6 0.6M-7.6 3.6H-1" stroke="#d4d4d4" stroke-width=".9" fill="none"/><path d="M-3.6 6.6L2.6 -7L5.4 -6L-0.8 7.6Z" fill="#e0e0e0" stroke="#cfcfcf" stroke-width=".7"/></g>
<g transform="translate(185.0,139.0)" ><rect x="-8" y="-7.4" width="16" height="14.8" fill="#e8e8e8" stroke="#d2d2d2" stroke-width=".9"/><path d="M-8 -7.4L0 -1L8 -7.4M-8 2H-1M-4 2V7.4" fill="none" stroke="#d6d6d6" stroke-width=".9"/><path d="M-0.6 -1.4L0.2 7L2.2 5.2L3.8 8L5.2 7.4L3.8 4.6L6.4 4.2Z" fill="#dcdcdc" stroke="#cacaca" stroke-width=".7"/></g>
<g transform="translate(201.4,139.4)" ><path d="M-3.6 -2.2 H3.6 L0 2.4Z" fill="#b0b0b0"/></g>
<g transform="translate(219.0,139.0)" ><rect x="-7.6" y="-7.4" width="5" height="5" fill="#eee" stroke="#cdcdcd" stroke-width=".8"/><path d="M-6.4 -6.2L-3.8 -3.6M-3.8 -6.2L-6.4 -3.6" stroke="#cdcdcd" stroke-width=".7"/><circle cx="3.4" cy="-5" r="2.8" fill="#f4f4f4" stroke="#cdcdcd" stroke-width=".8"/><rect x="-7.6" y="1.6" width="5" height="5.4" fill="#eee" stroke="#cdcdcd" stroke-width=".8"/><path d="M-7 2.2L-3.2 6.4M-3.2 2.2L-7 6.4" stroke="#cdcdcd" stroke-width=".7"/><text x="3.6" y="7.6" text-anchor="middle" font-family="Liberation Sans, sans-serif" font-size="11" fill="#c8c8c8">ε</text></g>
<g transform="translate(242.0,139.0)" ><rect x="-7.6" y="-7.4" width="15.2" height="14.8" fill="#f0f0f0" stroke="#d0d0d0" stroke-width=".9"/><path d="M-7.6 -7.4L-1.6 7.4M-7.6 7.4L0.4 -7.4M0.4 -7.4L7.6 7.4M7.6 -7.4L1.6 7.4" fill="none" stroke="#d2d2d2" stroke-width=".9"/><g fill="#fafafa" stroke="#d0d0d0" stroke-width=".7"><circle cx="-7.4" cy="-7.2" r="1.3"/><circle cx="7.4" cy="-7.2" r="1.3"/><circle cx="0.4" cy="-7.2" r="1.3"/></g></g>
<g transform="translate(259.0,139.4)" ><path d="M-3.6 -2.2 H3.6 L0 2.4Z" fill="#b0b0b0"/></g>
<g transform="translate(274.5,139.0)" ><path d="M-0.9 -6v12M1.1 -6v12" stroke="#e2e2e2" stroke-width="1" stroke-dasharray="1.5 1.5" fill="none"/></g>
<g transform="translate(291.0,139.0)" ><path d="M-7.6 -7H-1.6Q1 -7 1.6 -4.6T5 -1.6" fill="none" stroke="#3f6fae" stroke-width="1.1"/><circle cx="-7.6" cy="-7" r="1" fill="#3f6fae"/><path d="M5.4 -8.4L6.2 -6.8L8 -6.6L6.8 -5.4L7.2 -3.6L5.4 -4.4L3.8 -3.6L4.2 -5.4L3 -6.6L4.8 -6.8Z" fill="#5b8dc9" stroke="#2f5f9e" stroke-width=".5"/><text x="-3.6" y="5.6" text-anchor="middle" font-family="Liberation Sans, sans-serif" font-size="13" font-weight="bold" fill="#5b8dc9" stroke="#2f5f9e" stroke-width=".5">A</text><g transform="translate(4.6,4.8)"><rect x="-3.6" y="-3.6" width="7.2" height="7.2" rx="1" fill="#ecca3c" stroke="#c8a21a" stroke-width=".9"/><path d="M0 -2.5V2.5M-2.5 0H2.5M-1.8 -1.8L1.8 1.8M-1.8 1.8L1.8 -1.8" stroke="#fffdf0" stroke-width=".8"/><circle r="1" fill="#ecca3c"/></g></g>
<g transform="translate(307.6,139.4)" ><path d="M-3.6 -2.2 H3.6 L0 2.4Z" fill="#4a4a4a"/></g>
<g transform="translate(324.0,139.0)" ><path d="M-6.6 -7.4H5.4V5.6H-6.6Z" fill="none" stroke="#9a9a9a" stroke-width=".9" stroke-dasharray="1.5 1.5"/><rect x="-7.6" y="-8.4" width="2.4" height="2.4" fill="#eee" stroke="#666" stroke-width=".7"/><rect x="4.2" y="-8.4" width="2.4" height="2.4" fill="#eee" stroke="#666" stroke-width=".7"/><rect x="-7.6" y="3.4" width="2.4" height="2.4" fill="#eee" stroke="#666" stroke-width=".7"/><path d="M-4.6 -6.6L-3.6 6.4L-0.6 3.6L1.6 8L3.6 7L1.4 2.8L5.6 2.2Z" fill="#fff" stroke="#222" stroke-width="1" stroke-linejoin="round"/></g>
<g transform="translate(347.5,139.0)" ><path d="M-6 -7L5 -7.6L-0.6 6L-6.4 2.4Z" fill="none" stroke="#333" stroke-width="1"/><g fill="#2f7fe6"><circle cx="-6" cy="-7" r="1.9"/><circle cx="5" cy="-7.6" r="1.9"/><circle cx="-0.6" cy="6" r="1.9"/><circle cx="-6.4" cy="2.4" r="1.9"/></g><g transform="translate(5.0,4.8)"><rect x="-3.3" y="-3.3" width="6.6" height="6.6" rx="1.2" fill="#639f58" stroke="#8fb887" stroke-width=".8"/><path d="M0 -2.1V2.1M-2.1 0H2.1" stroke="#fff" stroke-width="1.6"/></g></g>
<g transform="translate(370.5,139.0)" ><path d="M6 -7.2H-4.4L-6.6 -1L-2.2 6" fill="none" stroke="#333" stroke-width="1"/><g fill="#2f7fe6"><circle cx="6" cy="-7.2" r="1.9"/><circle cx="-4.4" cy="-7.2" r="1.9"/><circle cx="-6.6" cy="-1" r="1.9"/><circle cx="-2.2" cy="6" r="1.9"/></g><g transform="translate(5.0,4.8)"><rect x="-3.3" y="-3.3" width="6.6" height="6.6" rx="1.2" fill="#639f58" stroke="#8fb887" stroke-width=".8"/><path d="M0 -2.1V2.1M-2.1 0H2.1" stroke="#fff" stroke-width="1.6"/></g></g>
<g transform="translate(394.0,139.0)" ><path d="M-1 -8L1.2 -2.8L6.8 -2.4L2.6 1.2L4 6.6L-1 3.6L-6 6.6L-4.6 1.2L-8.8 -2.4L-3.2 -2.8Z" fill="#f0dca0" stroke="#e0a8a0" stroke-width=".9"/><g transform="translate(5.0,4.8)"><rect x="-3.3" y="-3.3" width="6.6" height="6.6" rx="1.2" fill="#639f58" stroke="#8fb887" stroke-width=".8"/><path d="M0 -2.1V2.1M-2.1 0H2.1" stroke="#fff" stroke-width="1.6"/></g></g>
<g transform="translate(416.0,139.0)" ><rect x="-8.2" y="2.6" width="2.6" height="2.6" fill="#9a9a9a"/><text x="-1.6" y="4.4" text-anchor="middle" font-family="Liberation Serif, serif" font-size="13" fill="#333">T</text><g transform="translate(4.8,4.8)"><rect x="-3.3" y="-3.3" width="6.6" height="6.6" rx="1.2" fill="#639f58" stroke="#8fb887" stroke-width=".8"/><path d="M0 -2.1V2.1M-2.1 0H2.1" stroke="#fff" stroke-width="1.6"/></g></g>
<g transform="translate(429.5,139.0)" ><path d="M0 -7.5v15" stroke="#dedede" stroke-width="1.2"/></g>
<g transform="translate(444.0,139.0)" ><path d="M-7.6 -8H8V2.8H-2.6L-7.4 6.6L-5.4 2.8H-7.6Z" fill="#eef3fa" stroke="#9a9a9a" stroke-width="1"/><text x="0.4" y="0.8" text-anchor="middle" font-family="Liberation Serif, serif" font-size="11.5" fill="#333">T</text></g>
<g transform="translate(460.6,139.4)" ><path d="M-3.6 -2.2 H3.6 L0 2.4Z" fill="#4a4a4a"/></g>
<g transform="translate(476.5,139.0)" ><path d="M-0.9 -6v12M1.1 -6v12" stroke="#e2e2e2" stroke-width="1" stroke-dasharray="1.5 1.5" fill="none"/></g>
<g transform="translate(493.0,139.0)" ><rect x="-3.6" y="-3" width="11" height="10.4" fill="#fdfdfd" stroke="#8a8a8a" stroke-width="1.2"/><path d="M-3.6 -3L2 2.4L7.4 -3" fill="none" stroke="#9a9a9a" stroke-width=".9"/><path d="M-6.6 -8.6L-4.6 -6.6L-6.6 -4.6L-8.6 -6.6Z" fill="#1f4f8a"/><path d="M-4.4 -6.6H-3M-6.6 -4.4V-3" stroke="#1f4f8a" stroke-width="1.4"/><path d="M-5.4 -3.8L-3.8 -5.2L-2.4 -3.6" fill="none" stroke="#1f4f8a" stroke-width="1"/></g>
<g transform="translate(509.6,139.4)" ><path d="M-3.6 -2.2 H3.6 L0 2.4Z" fill="#4a4a4a"/></g>
<g transform="translate(527.0,139.0)" ><rect x="-3.6" y="-3" width="11" height="10.4" fill="#fdfdfd" stroke="#222" stroke-width="1.2"/><path d="M-3.6 -3L7.4 7.4M7.4 -3L-3.6 7.4" stroke="#222" stroke-width="1"/><g fill="#111"><rect x="-4.6" y="-4" width="2" height="2"/><rect x="6.4" y="-4" width="2" height="2"/><rect x="-4.6" y="6.4" width="2" height="2"/><rect x="6.4" y="6.4" width="2" height="2"/></g><path d="M-6.6 -8.6L-4.6 -6.6L-6.6 -4.6L-8.6 -6.6Z" fill="#1f4f8a"/><path d="M-4.4 -6.6H-3M-6.6 -4.4V-3" stroke="#1f4f8a" stroke-width="1.4"/><path d="M-5.4 -3.8L-3.8 -5.2L-2.4 -3.6" fill="none" stroke="#1f4f8a" stroke-width="1"/></g>
<g transform="translate(543.8,139.4)" ><path d="M-3.6 -2.2 H3.6 L0 2.4Z" fill="#4a4a4a"/></g>
<g transform="translate(561.0,139.0)" ><path d="M1 -3H-3.6V7.4H7.4V3" fill="none" stroke="#555" stroke-width="1.2"/><path d="M0.4 3.6L7 -3" stroke="#222" stroke-width="1.1"/><path d="M3.4 -3.6H7.6V0.6Z" fill="#111"/><path d="M-6.6 -8.6L-4.6 -6.6L-6.6 -4.6L-8.6 -6.6Z" fill="#1f4f8a"/><path d="M-4.4 -6.6H-3M-6.6 -4.4V-3" stroke="#1f4f8a" stroke-width="1.4"/><path d="M-5.4 -3.8L-3.8 -5.2L-2.4 -3.6" fill="none" stroke="#1f4f8a" stroke-width="1"/></g>
<g transform="translate(578.0,139.4)" ><path d="M-3.6 -2.2 H3.6 L0 2.4Z" fill="#4a4a4a"/></g>
<g transform="translate(595.5,139.0)" ><rect x="-3.6" y="-3" width="11" height="10.4" fill="#fdfdfd" stroke="#333" stroke-width="1.1"/><path d="M-3.6 7.4L7.4 -3V7.4Z" fill="#f0c020"/><path d="M-3.6 7.4L2 2.2L7.4 7.4Z" fill="#3a9a3a"/><path d="M-3.6 -3L7.4 7.4M7.4 -3L-3.6 7.4" stroke="#333" stroke-width=".8"/><path d="M-6.6 -8.6L-4.6 -6.6L-6.6 -4.6L-8.6 -6.6Z" fill="#1f4f8a"/><path d="M-4.4 -6.6H-3M-6.6 -4.4V-3" stroke="#1f4f8a" stroke-width="1.4"/><path d="M-5.4 -3.8L-3.8 -5.2L-2.4 -3.6" fill="none" stroke="#1f4f8a" stroke-width="1"/></g>
<g transform="translate(612.4,139.4)" ><path d="M-3.6 -2.2 H3.6 L0 2.4Z" fill="#4a4a4a"/></g>
<g transform="translate(630.0,139.0)" ><rect x="-3.6" y="-3" width="11" height="10.4" fill="#fdfdfd" stroke="#111" stroke-width="1"/><path d="M-2.4 -3V7.4M6.2 -3V7.4" stroke="#111" stroke-width="2.2" stroke-dasharray="1.6 1.4"/><path d="M-1 -0.6H5M-1 4.6H5" stroke="#111" stroke-width="1"/><path d="M-6.6 -8.6L-4.6 -6.6L-6.6 -4.6L-8.6 -6.6Z" fill="#1f4f8a"/><path d="M-4.4 -6.6H-3M-6.6 -4.4V-3" stroke="#1f4f8a" stroke-width="1.4"/><path d="M-5.4 -3.8L-3.8 -5.2L-2.4 -3.6" fill="none" stroke="#1f4f8a" stroke-width="1"/></g>
<g transform="translate(653.0,139.0)" ><rect x="-3.6" y="-3" width="11" height="10.4" fill="#fdfdfd" stroke="#777" stroke-width="1.2"/><path d="M-3 3Q-0.6 1 1 3.4T4.4 3Q6 2 7 3V7H-3Z" fill="#5fa8e0"/><path d="M-6.6 -8.6L-4.6 -6.6L-6.6 -4.6L-8.6 -6.6Z" fill="#1f4f8a"/><path d="M-4.4 -6.6H-3M-6.6 -4.4V-3" stroke="#1f4f8a" stroke-width="1.4"/><path d="M-5.4 -3.8L-3.8 -5.2L-2.4 -3.6" fill="none" stroke="#1f4f8a" stroke-width="1"/></g>
<g transform="translate(675.0,139.0)" ><rect x="-3.6" y="-3" width="11" height="10.4" fill="#fdfdfd" stroke="#333" stroke-width="1.1"/><path d="M-1.6 1.6V-1H3.6M5.4 3V5.6H0.4" fill="none" stroke="#111" stroke-width="2"/><path d="M3 -3L6.2 -1L3 1Z M1 3.6L-2.2 5.6L1 7.6Z" fill="#111"/><path d="M-6.6 -8.6L-4.6 -6.6L-6.6 -4.6L-8.6 -6.6Z" fill="#1f4f8a"/><path d="M-4.4 -6.6H-3M-6.6 -4.4V-3" stroke="#1f4f8a" stroke-width="1.4"/><path d="M-5.4 -3.8L-3.8 -5.2L-2.4 -3.6" fill="none" stroke="#1f4f8a" stroke-width="1"/></g>
<g transform="translate(691.6,139.4)" ><path d="M-3.6 -2.2 H3.6 L0 2.4Z" fill="#4a4a4a"/></g>
<rect x="698.5" y="129" width="165" height="19" rx="2" fill="#fefefe" stroke="#d9d9d9" stroke-width="1.2"/>
<g transform="translate(853.4,139.2)" ><path d="M-3.6 -2.2 H3.6 L0 2.4Z" fill="#4a4a4a"/></g>
</svg>
<span class="t" style="left:701.4px;top:130.8px;font-size:11px;letter-spacing:-0.278px;color:#000;">base</span>
<div class="a" style="left:39.6px;top:153px;width:1.4px;height:965px;background:#d6d6d6"></div>
<div class="a" style="left:266.3px;top:153px;width:1px;height:965px;background:#ececec"></div>
<div class="a" style="left:270.4px;top:153px;width:1.6px;height:965px;background:#dadada"></div>
<span class="t" style="left:43.0px;top:154.2px;font-size:11.2px;letter-spacing:-0.446px;color:#000;">Layers</span>
<div class="a" style="left:41px;top:193.8px;width:224px;height:16.4px;background:#1580dc"></div>
<svg class="a" style="left:62.3px;top:195.5px" width="13" height="13" viewBox="0 0 13 13"><rect x="0.5" y="0.5" width="12" height="12" fill="#fff" stroke="#fff"/><path d="M2.8 6.6 L5.3 9.4 L10.2 3.2" fill="none" stroke="#000" stroke-width="1.5"/></svg>
<div class="a" style="left:78.2px;top:194.6px;width:15.4px;height:15px;box-sizing:border-box;background:#176fc4;border:1px solid #1a5fa8;border-radius:1.5px"></div>
<span class="t" style="left:97.1px;top:194.6px;font-size:11.2px;font-weight:bold;letter-spacing:0.144px;color:#fff;text-decoration:underline;text-decoration-thickness:1px;text-underline-offset:1.5px;">Domain Outline</span>
<svg class="a" style="left:62.3px;top:212.4px" width="13" height="13" viewBox="0 0 13 13"><rect x="0.5" y="0.5" width="12" height="12" fill="#fff" stroke="#d9d9d9"/><path d="M2.8 6.6 L5.3 9.4 L10.2 3.2" fill="none" stroke="#000" stroke-width="1.5"/></svg>
<div class="a" style="left:78.2px;top:211.5px;width:15.4px;height:15px;box-sizing:border-box;background:#ffffff;border:1px solid #8c9ad8;border-radius:1.5px"></div>
<span class="t" style="left:97.1px;top:211.5px;font-size:11.2px;font-weight:bold;letter-spacing:0.044px;color:#000;">Boundary Conditions</span>
<svg class="a" style="left:62.3px;top:228.9px" width="13" height="13" viewBox="0 0 13 13"><rect x="0.5" y="0.5" width="12" height="12" fill="#fff" stroke="#d9d9d9"/><path d="M2.8 6.6 L5.3 9.4 L10.2 3.2" fill="none" stroke="#000" stroke-width="1.5"/></svg>
<svg class="a" style="left:79.0px;top:228.0px" width="15" height="16" viewBox="0 0 14 15"><path d="M1.5 6.5 h7 v7 h-7z" fill="#f4f4f4" stroke="#a8a8a8"/><path d="M4.5 4.5 h7 v7 h-7z" fill="#f4f4f4" stroke="#a0a0a0"/><path d="M6.8 9.5 V2.6 a1.7 1.7 0 0 1 3.4 0 V8.2" fill="none" stroke="#7d7d7d" stroke-width="1.2"/></svg>
<span class="t" style="left:97.1px;top:228.0px;font-size:11.2px;letter-spacing:0.682px;color:#000;">MESH_SPATIAL_DATA</span>
<svg class="a" style="left:81.5px;top:245.5px" width="13" height="13" viewBox="0 0 13 13"><rect x="0.5" y="0.5" width="12" height="12" fill="#fff" stroke="#d9d9d9"/><path d="M2.8 6.6 L5.3 9.4 L10.2 3.2" fill="none" stroke="#000" stroke-width="1.5"/></svg>
<div class="a" style="left:97.4px;top:244.6px;width:15.4px;height:15px;box-sizing:border-box;background:#ffffff;border:1px solid #a9c8a9;border-radius:1.5px"></div>
<span class="t" style="left:116.3px;top:244.6px;font-size:11.2px;font-weight:bold;letter-spacing:0.089px;color:#000;">Manning N</span>
<svg class="a" style="left:81.5px;top:262.0px" width="13" height="13" viewBox="0 0 13 13"><rect x="0.5" y="0.5" width="12" height="12" fill="#fff" stroke="#d9d9d9"/><path d="M2.8 6.6 L5.3 9.4 L10.2 3.2" fill="none" stroke="#000" stroke-width="1.5"/></svg>
<div class="a" style="left:97.4px;top:261.1px;width:15.4px;height:15px;box-sizing:border-box;background:#e0507f;border:1px solid #d8487a;border-radius:1.5px"></div>
<span class="t" style="left:116.3px;top:261.1px;font-size:11.2px;font-weight:bold;letter-spacing:0.336px;color:#000;">InitialWSE</span>
<svg class="a" style="left:62.3px;top:278.8px" width="13" height="13" viewBox="0 0 13 13"><rect x="0.5" y="0.5" width="12" height="12" fill="#fff" stroke="#d9d9d9"/><path d="M2.8 6.6 L5.3 9.4 L10.2 3.2" fill="none" stroke="#000" stroke-width="1.5"/></svg>
<svg class="a" style="left:79.0px;top:277.9px" width="15" height="16" viewBox="0 0 14 15"><path d="M1.5 6.5 h7 v7 h-7z" fill="#f4f4f4" stroke="#a8a8a8"/><path d="M4.5 4.5 h7 v7 h-7z" fill="#f4f4f4" stroke="#a0a0a0"/><path d="M6.8 9.5 V2.6 a1.7 1.7 0 0 1 3.4 0 V8.2" fill="none" stroke="#7d7d7d" stroke-width="1.2"/></svg>
<span class="t" style="left:97.1px;top:277.9px;font-size:11.2px;letter-spacing:0.102px;color:#000;">COMPONENTS</span>
<svg class="a" style="left:62.3px;top:295.3px" width="13" height="13" viewBox="0 0 13 13"><rect x="0.5" y="0.5" width="12" height="12" fill="#fff" stroke="#d9d9d9"/><path d="M2.8 6.6 L5.3 9.4 L10.2 3.2" fill="none" stroke="#000" stroke-width="1.5"/></svg>
<svg class="a" style="left:79.0px;top:294.4px" width="15" height="16" viewBox="0 0 14 15"><path d="M1.5 6.5 h7 v7 h-7z" fill="#f4f4f4" stroke="#a8a8a8"/><path d="M4.5 4.5 h7 v7 h-7z" fill="#f4f4f4" stroke="#a0a0a0"/><path d="M6.8 9.5 V2.6 a1.7 1.7 0 0 1 3.4 0 V8.2" fill="none" stroke="#7d7d7d" stroke-width="1.2"/></svg>
<span class="t" style="left:97.1px;top:294.4px;font-size:11.2px;letter-spacing:0.221px;color:#000;">OUTPUT_CONTROL</span>
<svg class="a" style="left:62.3px;top:311.9px" width="13" height="13" viewBox="0 0 13 13"><rect x="0.5" y="0.5" width="12" height="12" fill="#fff" stroke="#d9d9d9"/><path d="M2.8 6.6 L5.3 9.4 L10.2 3.2" fill="none" stroke="#000" stroke-width="1.5"/></svg>
<svg class="a" style="left:79.0px;top:311.0px" width="15" height="16" viewBox="0 0 14 15"><path d="M1.5 6.5 h7 v7 h-7z" fill="#f4f4f4" stroke="#a8a8a8"/><path d="M4.5 4.5 h7 v7 h-7z" fill="#f4f4f4" stroke="#a0a0a0"/><path d="M6.8 9.5 V2.6 a1.7 1.7 0 0 1 3.4 0 V8.2" fill="none" stroke="#7d7d7d" stroke-width="1.2"/></svg>
<span class="t" style="left:97.1px;top:311.0px;font-size:11.2px;letter-spacing:0.381px;color:#000;">OUTPUT_RESULTS</span>
<svg class="a" style="left:62.3px;top:328.4px" width="13" height="13" viewBox="0 0 13 13"><rect x="0.5" y="0.5" width="12" height="12" fill="#fff" stroke="#d9d9d9"/><path d="M2.8 6.6 L5.3 9.4 L10.2 3.2" fill="none" stroke="#000" stroke-width="1.5"/></svg>
<svg class="a" style="left:80px;top:328.4px" width="13" height="13" viewBox="0 0 12 12"><rect x="0" y="0" width="4" height="4" fill="#1d3557"/><rect x="4" y="0" width="4" height="4" fill="#a8c0dc"/><rect x="8" y="0" width="4" height="4" fill="#33588c"/><rect x="0" y="4" width="4" height="4" fill="#86a6cc"/><rect x="4" y="4" width="4" height="4" fill="#27456f"/><rect x="8" y="4" width="4" height="4" fill="#dfe8f2"/><rect x="0" y="8" width="4" height="4" fill="#2a4a78"/><rect x="4" y="8" width="4" height="4" fill="#cfdbea"/><rect x="8" y="8" width="4" height="4" fill="#f4f7fa"/></svg>
<span class="t" style="left:97.1px;top:327.5px;font-size:11.2px;font-weight:bold;letter-spacing:-0.131px;color:#000;">DEM</span>
<svg class="a" style="left:46px;top:232px" width="10" height="7" viewBox="0 0 10 7"><path d="M1.2 1.5h7.6L5 5.6z" fill="#6a6a6a"/></svg>
<svg class="a" style="left:0;top:153px" width="272" height="260" viewBox="0 153 272 260">
<path d="M16 158.6h9.6M16 160.6h9.6" stroke="#e6e6e6" stroke-width="1" stroke-dasharray="1.5 1.5"/>
<g transform="translate(14.2,174.5)" ><path d="M-6.6 -6.6L-2.6 4.6L2 -6.6H6.6" fill="none" stroke="#3a3a3a" stroke-width="1.1"/><g fill="#fff" stroke="#3a3a3a" stroke-width="1"><circle cx="-6.6" cy="-6.6" r="1.5"/><circle cx="-2.6" cy="4.6" r="1.5"/><circle cx="2" cy="-6.6" r="1.5"/><circle cx="6.6" cy="-6.6" r="1.5"/></g><g transform="translate(5.2,5.0)"><rect x="-3.3" y="-3.3" width="6.6" height="6.6" rx="1.2" fill="#639f58" stroke="#8fb887" stroke-width=".8"/><path d="M0 -2.1V2.1M-2.1 0H2.1" stroke="#fff" stroke-width="1.6"/></g></g>
<g transform="translate(14.2,197.0)" ><rect x="-8.6" y="-8.6" width="4.8" height="4.8" fill="#1d3557"/><rect x="-3.8" y="-8.6" width="4.8" height="4.8" fill="#86a6cc"/><rect x="1.0" y="-8.6" width="4.8" height="4.8" fill="#2a4a78"/><rect x="-8.6" y="-3.8" width="4.8" height="4.8" fill="#7d9fc8"/><rect x="-3.8" y="-3.8" width="4.8" height="4.8" fill="#1f3a62"/><rect x="1.0" y="-3.8" width="4.8" height="4.8" fill="#9ab6da"/><rect x="-8.6" y="1.0" width="4.8" height="4.8" fill="#27456f"/><rect x="-3.8" y="1.0" width="4.8" height="4.8" fill="#a8c0dc"/><rect x="1.0" y="1.0" width="4.8" height="4.8" fill="#e8eef6"/><g transform="translate(5.2,5.0)"><rect x="-3.3" y="-3.3" width="6.6" height="6.6" rx="1.2" fill="#639f58" stroke="#8fb887" stroke-width=".8"/><path d="M0 -2.1V2.1M-2.1 0H2.1" stroke="#fff" stroke-width="1.6"/></g></g>
<g transform="translate(14.2,219.2)" ><rect x="-8" y="-8" width="15.6" height="15.6" fill="#8fb1de" stroke="#2f5488" stroke-width="1"/><path d="M-8 1H7.6M0 -8V7.6M-8 -8L0 1M0 -8L-8 1M0 1L7.6 -8M-4 1V7.6M-8 4.4H0" stroke="#2f5488" stroke-width="1" fill="none"/><g transform="translate(5.2,5.0)"><rect x="-3.3" y="-3.3" width="6.6" height="6.6" rx="1.2" fill="#639f58" stroke="#8fb887" stroke-width=".8"/><path d="M0 -2.1V2.1M-2.1 0H2.1" stroke="#fff" stroke-width="1.6"/></g></g>
<g transform="translate(14.2,241.5)" ><path d="M-3.6 -7.4Q1.6 -8.4 2.2 -4Q2.6 1.6 -4.6 4.6Q-6.4 4.6 -5.4 3.2Q-1.6 1 -1.6 -1.6Q-6 -1 -6 -4.4Q-6 -7 -3.6 -7.4Z" fill="#4f78ae" stroke="#3a5f92" stroke-width=".6"/><g transform="translate(5.2,5.0)"><rect x="-3.3" y="-3.3" width="6.6" height="6.6" rx="1.2" fill="#639f58" stroke="#8fb887" stroke-width=".8"/><path d="M0 -2.1V2.1M-2.1 0H2.1" stroke="#fff" stroke-width="1.6"/></g></g>
<g transform="translate(14.2,263.0)" ><path d="M-7.6 7.6C-5.4 -1 0 -6.4 8 -8C7.4 -1.4 3 3.6 -4.6 4.2" fill="#8fb2de" stroke="#4f6f96" stroke-width=".9"/><path d="M-7.8 8L-1 -1.4L6 -6.6" fill="none" stroke="#3b587c" stroke-width="1"/><g transform="translate(5.2,5.0)"><rect x="-3.3" y="-3.3" width="6.6" height="6.6" rx="1.2" fill="#639f58" stroke="#8fb887" stroke-width=".8"/><path d="M0 -2.1V2.1M-2.1 0H2.1" stroke="#fff" stroke-width="1.6"/></g></g>
<g transform="translate(14.2,285.5)" ><rect x="-8" y="-8" width="15.8" height="15.6" rx="1.6" fill="#a9c4e4" stroke="#5d82b4" stroke-width="1"/><path d="M-4.8 -7.4L-2.6 3L2.4 -7.4" fill="none" stroke="#2f4668" stroke-width="1.1"/><circle cx="-2.6" cy="3.8" r="1.5" fill="#fff" stroke="#2f4668" stroke-width=".9"/><g transform="translate(5.2,5.0)"><rect x="-3.3" y="-3.3" width="6.6" height="6.6" rx="1.2" fill="#639f58" stroke="#8fb887" stroke-width=".8"/><path d="M0 -2.1V2.1M-2.1 0H2.1" stroke="#fff" stroke-width="1.6"/></g></g>
<g transform="translate(14.2,307.0)" ><path d="M-8.6 -4.6Q-8.6 -9 -3 -8.6Q3.6 -9.4 4.4 -4.6Q4.8 -1.4 3 2Q1.6 3.6 0 2.6L-0.4 -1Q-2 3.6 -4.6 3Q-8.6 -0.4 -8.6 -4.6Z" fill="#4f7fbe" stroke="#2f4f86" stroke-width=".9"/><path d="M-2.6 -6.4Q-2 -2 -3.6 1.4M0.4 -6.6Q2 -3 1.6 0.6" fill="none" stroke="#dfe9f6" stroke-width=".9"/><g transform="translate(5.2,5.6)"><rect x="-3.3" y="-3.3" width="6.6" height="6.6" rx="1.2" fill="#639f58" stroke="#8fb887" stroke-width=".8"/><path d="M0 -2.1V2.1M-2.1 0H2.1" stroke="#fff" stroke-width="1.6"/></g></g>
<g transform="translate(31.0,307.4)" ><path d="M-3.6 -2.2 H3.6 L0 2.4Z" fill="#4a4a4a"/></g>
<g transform="translate(14.2,329.5)" ><circle cx="0" cy="-0.8" r="8" fill="#a9c6ec" stroke="#3f64a0" stroke-width=".9"/><path d="M-8 -0.8H8M0 -8.8V7.2M-6.8 -4.8H6.8M-6.8 3.2H6.8" stroke="#6f93c8" stroke-width=".6"/><ellipse cx="0" cy="-0.8" rx="4" ry="8" fill="none" stroke="#6f93c8" stroke-width=".6"/><path d="M-5.6 -4.6q2 -2 3.6 -.4q.4 2.4 -1.6 3.4q-2.4 .6 -2 -3zM1 -5.6q2.6 -1 4.4 1q-.4 2.6 -2.4 2.2q-2.4 -.6 -2 -3.2zM-1.6 1q2 -.6 2.6 1.4q-.6 2.4 -2.4 1.6z" fill="#2f4f86"/><g transform="translate(5.2,5.4)"><rect x="-3.3" y="-3.3" width="6.6" height="6.6" rx="1.2" fill="#639f58" stroke="#8fb887" stroke-width=".8"/><path d="M0 -2.1V2.1M-2.1 0H2.1" stroke="#fff" stroke-width="1.6"/></g></g>
<g transform="translate(14.2,351.5)" ><circle cx="0" cy="-0.8" r="8" fill="#2f4f7e" stroke="#1f3558" stroke-width=".9"/><path d="M-8 -0.8H8M-6.8 -4.8H6.8M-6.8 3.2H6.8" stroke="#c6d8f0" stroke-width="1.5"/><ellipse cx="0" cy="-0.8" rx="4" ry="8" fill="none" stroke="#c6d8f0" stroke-width="1.2"/><path d="M0 -8.8V7.2" stroke="#c6d8f0" stroke-width="1"/><g transform="translate(5.2,5.4)"><rect x="-3.3" y="-3.3" width="6.6" height="6.6" rx="1.2" fill="#639f58" stroke="#8fb887" stroke-width=".8"/><path d="M0 -2.1V2.1M-2.1 0H2.1" stroke="#fff" stroke-width="1.6"/></g></g>
<g transform="translate(14.2,373.5)" ><circle cx="0" cy="-0.8" r="8" fill="#dfeaf8" stroke="#5f88c4" stroke-width=".9"/><path d="M-8 -0.8H8M0 -8.8V7.2M-6.8 -4.8H6.8M-6.8 3.2H6.8" stroke="#8fb0de" stroke-width=".7"/><ellipse cx="0" cy="-0.8" rx="4" ry="8" fill="none" stroke="#8fb0de" stroke-width=".7"/><path d="M-4.6 -5.6L-1.4 3L3 -5.6" fill="none" stroke="#33507c" stroke-width="1.1"/><circle cx="-1.4" cy="3" r="1.2" fill="#fff" stroke="#33507c" stroke-width=".8"/><g transform="translate(5.2,5.4)"><rect x="-3.3" y="-3.3" width="6.6" height="6.6" rx="1.2" fill="#639f58" stroke="#8fb887" stroke-width=".8"/><path d="M0 -2.1V2.1M-2.1 0H2.1" stroke="#fff" stroke-width="1.6"/></g></g>
<g transform="translate(14.6,396.0)" ><path d="M-5 -7V-4M-2.6 -7V-4M-0.2 -7V-4M2.2 -7V-4M4.6 -7V-4M-5 6.4V3.4M-2.6 6.4V3.4M-0.2 6.4V3.4" stroke="#4f6f96" stroke-width="1.1"/><rect x="-7.4" y="-4.4" width="14" height="8.2" rx="1.4" fill="#6f9bd0" stroke="#456c9e" stroke-width=".9"/><g transform="translate(4.8,5.4)"><rect x="-3.6" y="-3.6" width="7.2" height="7.2" rx="1" fill="#ecca3c" stroke="#c8a21a" stroke-width=".9"/><path d="M0 -2.5V2.5M-2.5 0H2.5M-1.8 -1.8L1.8 1.8M-1.8 1.8L1.8 -1.8" stroke="#fffdf0" stroke-width=".8"/><circle r="1" fill="#ecca3c"/></g></g>
<g transform="translate(31.0,396.0)" ><path d="M-3.6 -2.2 H3.6 L0 2.4Z" fill="#4a4a4a"/></g>
<g transform="translate(52.4,181.2)" ><rect x="-8.8" y="-8.6" width="17.6" height="17" rx="1.5" fill="#dfdfdf" stroke="#c4c4c4" stroke-width="1"/><path d="M-6 1L-1.6 -3.4L1.6 3.6L-2.6 5.4Z" fill="#e23a3a"/><path d="M-5.4 -0.4L-1 -4.4L4 -3L-0.6 0.6Z" fill="#f0cc3a"/><path d="M-6.4 1.4L-2.6 5.4L-5.4 4.6Z" fill="#4f82c0"/><path d="M0.6 2.6L6.6 -5.4" stroke="#e0a63a" stroke-width="1.5" stroke-linecap="round"/></g>
<g transform="translate(70.6,181.2)" ><path d="M-5.6 -1.6H2V6.6H-5.6Z" fill="#ececec" stroke="#a4a4a4" stroke-width=".9"/><path d="M-3 -4.4H4.6V4H-3Z" fill="#e6e6e6" stroke="#9a9a9a" stroke-width=".9"/><path d="M-0.6 1.6V-5.4A1.7 1.7 0 0 1 2.8 -5.4V0.6" fill="none" stroke="#8a8a8a" stroke-width="1.1"/><g transform="translate(3.8,4.8)"><rect x="-3.3" y="-3.3" width="6.6" height="6.6" rx="1.2" fill="#639f58" stroke="#8fb887" stroke-width=".8"/><path d="M0 -2.1V2.1M-2.1 0H2.1" stroke="#fff" stroke-width="1.6"/></g></g>
<g transform="translate(89.6,181.2)" ><path d="M-7.6 -0.4Q-1.6 -7 6 -0.4Q-1.6 5.4 -7.6 -0.4Z" fill="#e4e4e4" stroke="#8e8e8e" stroke-width="1"/><circle cx="-1" cy="-0.6" r="2.6" fill="#4a6a9a" stroke="#2f4a74" stroke-width=".6"/><circle cx="-1" cy="-0.6" r="1" fill="#1a1a1a"/><path d="M1.4 3H7.6L4.5 6.6Z" fill="#444"/></g>
<g transform="translate(107.5,181.2)" ><path d="M-6.6 -6.4H6.6L1.4 0.4V6L-1.4 4V0.4Z" fill="#6f9fd8" stroke="#3f6ca6" stroke-width=".8"/><path d="M-6.6 -6.4H6.6L5.4 -4.6H-5.4Z" fill="#f0cc3a" stroke="#c9a31c" stroke-width=".6"/><path d="M1.6 3.6H7.6L4.6 7Z" fill="#444"/></g>
<g transform="translate(125.6,181.2)" ><text x="-2.6" y="2" text-anchor="middle" font-family="DejaVu Sans, sans-serif" font-size="11.5" fill="#333">ε</text><path d="M1 6.6V2.6Q1 1 2.6 1H5Q6.6 1 6.6 2.6V6.6" fill="#f4f4f4" stroke="#9a9a9a" stroke-width="1.1"/></g>
<g transform="translate(140.0,181.0)" ><path d="M-3.6 -2.2 H3.6 L0 2.4Z" fill="#4a4a4a"/></g>
<g transform="translate(155.8,181.2)" ><path d="M-6 -6.4H1.4V6.4H-6Z" fill="#f2f2f2" stroke="#c4c4c4" stroke-width=".9"/><rect x="-4.4" y="-2.4" width="2.6" height="2" fill="#e8c23a"/><rect x="-4.4" y="2.6" width="2.6" height="2" fill="#e8c23a"/><path d="M0 -6.6H3.6V0.4H6.2L1.8 6.6L-2.6 0.4H0Z" fill="#4f82c0" stroke="#2f5f9e" stroke-width=".7"/></g>
<g transform="translate(174.0,181.2)" ><path d="M-6 -6.4H1.4V6.4H-6Z" fill="#f2f2f2" stroke="#c4c4c4" stroke-width=".9"/><rect x="-4.4" y="-2.4" width="2.6" height="2" fill="#e8c23a"/><rect x="-4.4" y="2.6" width="2.6" height="2" fill="#e8c23a"/><path d="M0 6.4H3.6V-0.6H6.2L1.8 -6.8L-2.6 -0.6H0Z" fill="#4f82c0" stroke="#2f5f9e" stroke-width=".7"/></g>
<g transform="translate(192.0,181.2)" ><rect x="-6" y="-6.2" width="9.6" height="9.6" fill="#f0f0f0" stroke="#7a7a7a" stroke-width="1.1"/><rect x="0.6" y="1.6" width="5.6" height="4.4" rx="1.6" fill="#fff" stroke="#e03a4a" stroke-width="1.3"/></g>
<g transform="translate(253.3,161.0)" ><rect x="-3.2" y="-3" width="6.4" height="6" rx="1.6" fill="#9c9c9c" stroke="#8a8a8a" stroke-width=".6"/><path d="M-1.8 1.8L1.8 -1.6M-1.8 -0.4V-1.6H-0.6M1.8 0.6V1.8H0.6" stroke="#f4f4f4" stroke-width=".8" fill="none"/></g>
<g transform="translate(261.8,161.0)" ><rect x="-3.2" y="-3" width="6.4" height="6" rx="1.6" fill="#9c9c9c" stroke="#8a8a8a" stroke-width=".6"/><path d="M-1.7 -1.6L1.7 1.6M1.7 -1.6L-1.7 1.6" stroke="#f4f4f4" stroke-width="1"/></g>
</svg>
</body></html>
